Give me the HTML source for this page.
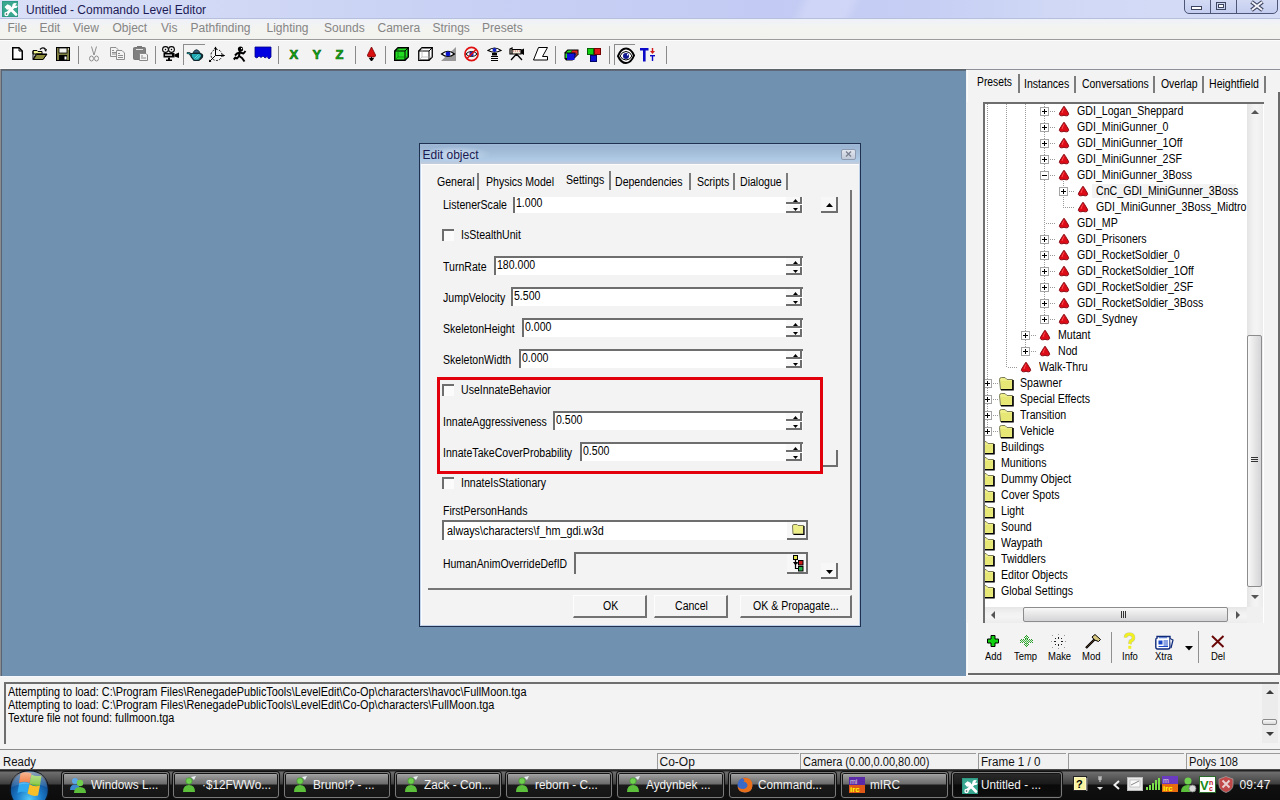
<!DOCTYPE html><html><head><meta charset="utf-8"><title>Commando Level Editor</title><style>
html,body{margin:0;padding:0;}
body{width:1280px;height:800px;overflow:hidden;position:relative;background:#f3f3f3;font-family:"Liberation Sans",sans-serif;}
.t{position:absolute;white-space:pre;font-family:"Liberation Sans",sans-serif;}
.r{position:absolute;}
svg.r{overflow:visible;}
</style></head><body>
<div class="r" style="left:0px;top:0px;width:1280px;height:18px;background:linear-gradient(115deg,transparent 0 62%,rgba(255,255,255,0.18) 63% 66%,transparent 67%),linear-gradient(90deg,#dae0f7 0%,#d0d8f5 18%,#c8d0f4 38%,#c3cbf4 60%,#c6cef4 72%,#d0d8f6 82%,#d4dcf6 100%);"></div>
<div class="r" style="left:0px;top:18px;width:1280px;height:1px;background:#b6c0dc;"></div>
<svg class="r" style="left:2px;top:1px;" width="16" height="16" viewBox="0 0 16 16"><rect width="16" height="16" fill="#2e9a84"/><rect x="1" y="1" width="14" height="14" fill="#3aa890"/><path d="M7.5 7 L14 13.5" stroke="#fff" stroke-width="2.8" stroke-linecap="round"/><path d="M2.5 6 L5.5 3.2 L9 5 L8.5 8.5 L5 8.8 Z" fill="#fff"/><path d="M5 12.5 L12 5.5" stroke="#fff" stroke-width="2.8"/><circle cx="13" cy="4.5" r="2.6" fill="#fff"/><path d="M13 4.5 L15.5 2 L16 5 Z" fill="#3aa890"/><circle cx="4.5" cy="13" r="2.2" fill="#fff"/><circle cx="4.5" cy="13" r="0.8" fill="#1a4a40"/></svg>
<div class="t" style="left:26px;top:4.00px;font-size:12px;line-height:12px;color:#1d1b55;">Untitled - Commando Level Editor</div>
<div class="r" style="left:1184px;top:-2px;width:94px;height:16px;border:1px solid #4d5676;border-radius:0 0 5px 5px;background:linear-gradient(#d3dbf4,#c4cdef);box-sizing:border-box;"></div>
<div class="r" style="left:1210px;top:0px;width:1px;height:14px;background:#4d5676;"></div>
<div class="r" style="left:1236px;top:0px;width:1px;height:14px;background:#4d5676;"></div>
<div class="r" style="left:1191px;top:6px;width:11px;height:4px;border:1px solid #3c4460;background:#fff;box-sizing:border-box;"></div>
<div class="r" style="left:1216px;top:2px;width:10px;height:8px;border:1px solid #3c4460;box-sizing:border-box;"></div>
<div class="r" style="left:1218px;top:4px;width:6px;height:4px;border:1px solid #3c4460;box-sizing:border-box;background:#fff;"></div>
<svg class="r" style="left:1250px;top:1px;" width="14" height="10" viewBox="0 0 14 10"><path d="M1.5 0.8 L12.5 9.2 M12.5 0.8 L1.5 9.2" stroke="#3c4460" stroke-width="4"/><path d="M1.8 1 L12.2 9 M12.2 1 L1.8 9" stroke="#f4f4fa" stroke-width="1.8"/></svg>
<div class="r" style="left:0px;top:19px;width:1280px;height:20px;background:linear-gradient(#eef1f9,#f3f3f1 40%,#f2f2ee);"></div>
<div class="r" style="left:0px;top:39px;width:1280px;height:1px;background:#9c9c9c;"></div>
<div class="t" style="left:7.5px;top:22.00px;font-size:12px;line-height:12px;color:#858585;">File</div>
<div class="t" style="left:39.5px;top:22.00px;font-size:12px;line-height:12px;color:#858585;">Edit</div>
<div class="t" style="left:73px;top:22.00px;font-size:12px;line-height:12px;color:#858585;">View</div>
<div class="t" style="left:112.5px;top:22.00px;font-size:12px;line-height:12px;color:#858585;">Object</div>
<div class="t" style="left:161px;top:22.00px;font-size:12px;line-height:12px;color:#858585;">Vis</div>
<div class="t" style="left:190.5px;top:22.00px;font-size:12px;line-height:12px;color:#858585;">Pathfinding</div>
<div class="t" style="left:266.5px;top:22.00px;font-size:12px;line-height:12px;color:#858585;">Lighting</div>
<div class="t" style="left:324px;top:22.00px;font-size:12px;line-height:12px;color:#858585;">Sounds</div>
<div class="t" style="left:377.5px;top:22.00px;font-size:12px;line-height:12px;color:#858585;">Camera</div>
<div class="t" style="left:432.5px;top:22.00px;font-size:12px;line-height:12px;color:#858585;">Strings</div>
<div class="t" style="left:482px;top:22.00px;font-size:12px;line-height:12px;color:#858585;">Presets</div>
<div class="r" style="left:0px;top:40px;width:1280px;height:29px;background:#f3f3f3;"></div>
<div class="r" style="left:0px;top:40px;width:1280px;height:1px;background:#fcfcfc;"></div>
<div class="r" style="left:0px;top:68px;width:966px;height:1px;background:#f8f8f8;"></div>
<div class="r" style="left:78px;top:46px;width:1px;height:18px;background:#8a8a8a;"></div>
<div class="r" style="left:155px;top:46px;width:1px;height:18px;background:#8a8a8a;"></div>
<div class="r" style="left:278px;top:46px;width:1px;height:18px;background:#8a8a8a;"></div>
<div class="r" style="left:355px;top:46px;width:1px;height:18px;background:#8a8a8a;"></div>
<div class="r" style="left:385px;top:46px;width:1px;height:18px;background:#8a8a8a;"></div>
<div class="r" style="left:555px;top:46px;width:1px;height:18px;background:#8a8a8a;"></div>
<div class="r" style="left:609px;top:46px;width:1px;height:18px;background:#8a8a8a;"></div>
<div class="r" style="left:666px;top:46px;width:1px;height:18px;background:#8a8a8a;"></div>
<svg class="r" style="left:12px;top:47px;" width="11" height="13" viewBox="0 0 11 13"><path d="M0.75 0.75 H7 L10.25 4 V12.25 H0.75 Z" fill="#fff" stroke="#000" stroke-width="1.5"/><path d="M7 1 V4 H10" fill="none" stroke="#000" stroke-width="1"/></svg>
<svg class="r" style="left:32px;top:47px;" width="16" height="14" viewBox="0 0 16 14"><path d="M1 3.5 H5 L6 4.5 H10 V7 H1 Z" fill="#f2f28a" stroke="#000" stroke-width="1"/><path d="M1 4 V12.5 L4 7 H15 L11 12.5 H1" fill="#f2f28a" stroke="#000" stroke-width="1"/><path d="M1.5 12.5 L4.5 7.5 H14.5 L11 12.5 Z" fill="#8c8c3c" stroke="#000" stroke-width="1"/><path d="M8 2.5 Q10.5 -0.5 13.5 2" fill="none" stroke="#000" stroke-width="1.2"/><path d="M12 2.5 L15 2 L14 5 Z" fill="#000"/></svg>
<svg class="r" style="left:56px;top:47px;" width="14" height="14" viewBox="0 0 14 14"><rect x="0.5" y="0.5" width="13" height="13" fill="#7f7f44" stroke="#000" stroke-width="1"/><rect x="3" y="1" width="8" height="5" fill="#f4f4f0" stroke="#000" stroke-width="0.8"/><rect x="3" y="8" width="8" height="5.5" fill="#000"/><rect x="8.5" y="9.5" width="2" height="3" fill="#fff"/><rect x="12" y="1.5" width="1" height="1" fill="#fff"/></svg>
<svg class="r" style="left:89px;top:46px;" width="10" height="16" viewBox="0 0 10 16"><path d="M2.5 0.5 L5 9 M7.5 0.5 L5 9" stroke="#8f8f8f" stroke-width="1"/><ellipse cx="2.5" cy="12.5" rx="2" ry="2.5" fill="none" stroke="#8f8f8f" stroke-width="1"/><ellipse cx="7.5" cy="12.5" rx="2" ry="2.5" fill="none" stroke="#8f8f8f" stroke-width="1"/></svg>
<svg class="r" style="left:110px;top:47px;" width="16" height="13" viewBox="0 0 16 13"><path d="M0.5 0.5 H6 L8 2.5 V9.5 H0.5 Z" fill="#f4f4f4" stroke="#8f8f8f"/><path d="M2 3.5 H4 M2 5.5 H6 M2 7 H6" stroke="#8f8f8f"/><path d="M6.5 3.5 H12 L14.5 6 V12.5 H6.5 Z" fill="#f4f4f4" stroke="#8f8f8f"/><path d="M8 6.5 H10 M8 8.5 H13 M8 10.5 H13" stroke="#8f8f8f"/></svg>
<svg class="r" style="left:133px;top:46px;" width="16" height="15" viewBox="0 0 16 15"><rect x="0.5" y="1.5" width="12" height="12" rx="1" fill="#808080" stroke="#777"/><rect x="4" y="0" width="5" height="2" fill="#777"/><rect x="3" y="3" width="7" height="1" fill="#e0e0e0"/><path d="M6.5 7.5 H13 L14.5 9 V14.5 H6.5 Z" fill="#f4f4f4" stroke="#888"/><path d="M8 10 H10 M8 12 H13" stroke="#888"/></svg>
<svg class="r" style="left:162px;top:46px;" width="18" height="15" viewBox="0 0 18 15"><circle cx="3.5" cy="3.5" r="2.9" fill="#fff" stroke="#000" stroke-width="1.1"/><circle cx="9.5" cy="3.5" r="2.9" fill="#fff" stroke="#000" stroke-width="1.1"/><rect x="2.8" y="2.8" width="1.4" height="1.4" fill="#000"/><rect x="8.8" y="2.8" width="1.4" height="1.4" fill="#000"/><rect x="1.5" y="7" width="11" height="4.5" fill="#000"/><rect x="3" y="8.5" width="7" height="1.2" fill="#fff"/><path d="M12.5 8.5 L17 6.5 V12 L12.5 10.5 Z" fill="#000"/><rect x="6" y="11.5" width="2" height="2.5" fill="#000"/><rect x="4" y="13.5" width="6" height="1.5" fill="#000"/></svg>
<div class="r" style="left:183px;top:44px;width:22px;height:1px;background:#8c8c8c;"></div>
<div class="r" style="left:183px;top:44px;width:1px;height:21px;background:#8c8c8c;"></div>
<svg class="r" style="left:186px;top:49px;" width="18" height="13" viewBox="0 0 18 13"><path d="M0.8 4 L3.5 4.2 L6.5 8" stroke="#102a30" stroke-width="2.2" fill="none"/><path d="M1.2 4.1 L3.4 4.4 L6.3 7.8" stroke="#20a8b0" stroke-width="0.8" fill="none"/><path d="M14 4.8 Q17.2 5.2 16.2 8 L14 10.5" stroke="#102a30" stroke-width="1.6" fill="none"/><path d="M5 4.5 H14.5 L15.8 7 L13 11.3 H8 L5.3 8 Z" fill="#20a8b0" stroke="#102a30" stroke-width="1.2"/><path d="M7 3.8 Q8.5 0.8 10.5 0.8 Q12.5 0.8 14 3.8 Z" fill="#3a5a80" stroke="#102a30" stroke-width="1"/><path d="M8.5 9.5 L12.5 5.5 M10 10.5 L14 6.5" stroke="#70e0e8" stroke-width="0.9"/></svg>
<svg class="r" style="left:208px;top:46px;" width="18" height="17" viewBox="0 0 18 17"><path d="M7.5 1 V9.5 L16.5 9.5 M7.5 9.5 L1.5 15.5" stroke="#000" stroke-width="1" fill="none"/><path d="M6 3 L7.5 0.5 L9 3 Z M14.5 8 L17 9.5 L14.5 11 Z M1 13.5 L1 16 L3.5 16 Z" fill="#000"/><circle cx="8.5" cy="9" r="5.5" fill="none" stroke="#000" stroke-width="1" stroke-dasharray="2 1.5"/></svg>
<svg class="r" style="left:233px;top:46px;" width="14" height="16" viewBox="0 0 14 16"><circle cx="7.5" cy="3" r="2.6" fill="#000"/><rect x="8" y="2" width="1.2" height="1.2" fill="#fff"/><path d="M7 5 L6 10 L9 12 L11.5 15.5 M6 10 L4 12.5 L2.5 11.5 L0.8 13.5 M6.8 6.5 L4 7.5 L2 9.5 M7 6.5 L10.5 7.5 L12.5 5" stroke="#000" stroke-width="2" fill="none" stroke-linejoin="round"/></svg>
<svg class="r" style="left:255px;top:47px;" width="16" height="13" viewBox="0 0 16 13"><path d="M0 0 H16 V10 L14 12 L12 9.5 L10 11 L8 9 L6 10.5 L4 9 L2 11 L0 10 Z" fill="#0000e0" stroke="#00008a" stroke-width="0.8"/></svg>
<div class="t" style="left:289.5px;top:48px;font-size:13px;line-height:13px;font-weight:bold;color:#12b812;-webkit-text-stroke:0.6px #0a5a0a;">X</div>
<div class="t" style="left:312.5px;top:48px;font-size:13px;line-height:13px;font-weight:bold;color:#12b812;-webkit-text-stroke:0.6px #0a5a0a;">Y</div>
<div class="t" style="left:335.5px;top:48px;font-size:13px;line-height:13px;font-weight:bold;color:#12b812;-webkit-text-stroke:0.6px #0a5a0a;">Z</div>
<svg class="r" style="left:366px;top:46px;" width="11" height="16" viewBox="0 0 11 16"><path d="M5.5 1 L9.5 9 Q10 10.5 8 11 H3 Q1 10.5 1.5 9 Z" fill="#d81010" stroke="#700" stroke-width="0.8"/><path d="M5.5 11 V14 M3.5 12.5 L5.5 15 L7.5 12.5 Z" stroke="#000" fill="#000"/></svg>
<svg class="r" style="left:394px;top:47px;" width="15" height="14" viewBox="0 0 15 14"><path d="M0.75 4 L4 0.75 H14.25 V10 L11 13.25 H0.75 Z" fill="#22dd22" stroke="#000" stroke-width="1.5"/><path d="M0.75 4 H11 V13.25 M11 4 L14.25 0.75" stroke="#000" stroke-width="1" fill="none"/><path d="M4 1 V10 H14 M4 10 L1 13" stroke="#087008" stroke-width="0.7" fill="none"/></svg>
<svg class="r" style="left:418px;top:47px;" width="15" height="14" viewBox="0 0 15 14"><path d="M0.75 4 L4 0.75 H14.25 V10 L11 13.25 H0.75 Z" fill="#fff" stroke="#000" stroke-width="1.3"/><path d="M0.75 4 H11 V13.25 M11 4 L14.25 0.75" stroke="#000" stroke-width="1" fill="none"/><path d="M4 1 V10 H14 M4 10 L1 13" stroke="#aaa" stroke-width="0.7" fill="none"/></svg>
<svg class="r" style="left:440px;top:46px;" width="17" height="16" viewBox="0 0 17 16"><path d="M16 1 V15 H1 Z" fill="#999"/><path d="M1.5 8 Q8 2.5 14.5 8 Q8 13 1.5 8 Z" fill="#fff" stroke="#000" stroke-width="1.2"/><circle cx="8" cy="8" r="2.4" fill="#0a14c8"/></svg>
<svg class="r" style="left:463px;top:46px;" width="17" height="16" viewBox="0 0 17 16"><path d="M2.5 8 Q8.5 3 14.5 8 Q8.5 13 2.5 8 Z" fill="#fff" stroke="#000" stroke-width="1"/><circle cx="8.5" cy="8" r="2.2" fill="#2020c0"/><circle cx="8.5" cy="8" r="6.6" fill="none" stroke="#e01010" stroke-width="1.6"/><path d="M4 12.5 L13 3.5" stroke="#e01010" stroke-width="1.6"/></svg>
<svg class="r" style="left:487px;top:46px;" width="15" height="17" viewBox="0 0 15 17"><path d="M1 4.5 Q7.5 -0.5 14 4.5 Q7.5 8 1 4.5 Z" fill="#fff" stroke="#000" stroke-width="1.2"/><circle cx="7.5" cy="4" r="2" fill="#1020c0"/><path d="M5 7 H10 V9.5 H5 Z" fill="#000"/><path d="M4 10.5 H11 M4 12.5 H11 M4 14.5 H11" stroke="#000" stroke-width="1.2"/></svg>
<svg class="r" style="left:509px;top:46px;" width="16" height="16" viewBox="0 0 16 16"><path d="M1 3 L3 2 V8 H1 Z M3 3.5 H12 V8 H3 Z" fill="#f4e8d8" stroke="#000" stroke-width="1.2"/><path d="M12 4 L15 2.5 V9 L12 7.5 Z" fill="#000"/><path d="M4 5 H11" stroke="#b04040" stroke-width="0.8" stroke-dasharray="1 1"/><path d="M7.5 8 L2 14 M7.5 8 L13 14 M7.5 8 V10" stroke="#000" stroke-width="1.3"/></svg>
<svg class="r" style="left:533px;top:47px;" width="15" height="14" viewBox="0 0 15 14"><path d="M5.5 0.5 H14.5 L9.5 9.5 H14.5 V13 H0.5 Z" fill="#fff" stroke="#000" stroke-width="1"/></svg>
<svg class="r" style="left:564px;top:49px;" width="15" height="12" viewBox="0 0 15 12"><path d="M0.5 3.5 L3.5 0.5 H14.5 V5.5 L8.5 11.5 H2 L0.5 9.5 Z" fill="#000"/><path d="M2 3.5 L4 1.5 H8.5 L6.5 3.5 Z M1.5 4.5 H3 V9 H1.5 Z" fill="#22e022"/><path d="M8.5 1.5 H13.5 V5 L11.5 7 V3.5 H7 Z" fill="#e02020"/><path d="M11 5 L13.5 3 V5.5 L11 8 Z" fill="#a04020"/><rect x="3" y="4.5" width="7.5" height="6.5" fill="#1010d8"/><path d="M10.5 4.5 L12.5 4.5 L10.5 9 Z" fill="#0808a0"/></svg>
<svg class="r" style="left:587px;top:48px;" width="14" height="14" viewBox="0 0 14 14"><rect x="0.5" y="0.5" width="6" height="6" fill="#10d010" stroke="#086008" stroke-width="1"/><rect x="7.5" y="0.5" width="6" height="6" fill="#e01818" stroke="#700" stroke-width="1"/><rect x="3.5" y="7.5" width="6" height="6" fill="#1010d0" stroke="#00086a" stroke-width="1"/></svg>
<div class="r" style="left:614px;top:44px;width:21px;height:1px;background:#8c8c8c;"></div>
<div class="r" style="left:614px;top:44px;width:1px;height:21px;background:#8c8c8c;"></div>
<svg class="r" style="left:617px;top:47px;" width="18" height="17" viewBox="0 0 18 17"><path d="M1 9 Q4 1.5 9 1.5 Q14 1.5 17 8.5 Q14 16 9 16 Q4 16 1 9 Z" fill="#fff" stroke="#000" stroke-width="2"/><path d="M3 9 Q5 4.5 9 4.5 Q13 4.5 15 9 Q13 13 9 13 Q5 13 3 9 Z" fill="none" stroke="#000" stroke-width="1"/><circle cx="9" cy="9" r="3" fill="#101890"/><rect x="10" y="7" width="1.2" height="1.5" fill="#fff"/></svg>
<svg class="r" style="left:640px;top:48px;" width="16" height="14" viewBox="0 0 16 14"><rect x="0" y="0" width="8.5" height="2.5" fill="#0a0ac8"/><rect x="3" y="0" width="2.6" height="13.5" fill="#0a0ac8"/><path d="M12.5 0 V3.5" stroke="#d01818" stroke-width="1.4"/><path d="M10 3 H15 L12.5 6 Z" fill="#d01818"/><rect x="10" y="7" width="5" height="1.4" fill="#0a0ac8"/><rect x="11.8" y="7" width="1.4" height="6" fill="#0a0ac8"/></svg>
<div class="r" style="left:0px;top:70px;width:966px;height:606px;background:#7091b0;"></div>
<div class="r" style="left:0px;top:69px;width:966px;height:1px;background:#5c636b;"></div>
<div class="r" style="left:0px;top:70px;width:966px;height:1px;background:#5c6a7a;"></div>
<div class="r" style="left:0px;top:69px;width:1px;height:607px;background:#8a8c90;"></div>
<div class="r" style="left:1px;top:70px;width:1px;height:606px;background:#5a6474;"></div>
<div class="r" style="left:966px;top:69px;width:314px;height:607px;background:#f3f3f3;"></div>
<div class="r" style="left:966px;top:69px;width:314px;height:1px;background:#8d9197;"></div>
<div class="r" style="left:967px;top:70px;width:1px;height:605px;background:#fbfbfb;"></div>
<div class="r" style="left:968px;top:673px;width:312px;height:2px;background:#6a6a6a;"></div>
<div class="r" style="left:966px;top:676px;width:314px;height:1px;background:#8a8a8a;"></div>
<div class="r" style="left:1278px;top:92px;width:2px;height:583px;background:#6a6a6a;"></div>
<div class="r" style="left:0px;top:676px;width:1280px;height:74px;background:#f3f3f3;"></div>
<div class="r" style="left:0px;top:676px;width:966px;height:1px;background:#f4f7fb;"></div>
<div class="r" style="left:966px;top:675px;width:314px;height:1px;background:#f8f8f8;"></div>
<div class="r" style="left:4px;top:682px;width:1275px;height:62px;background:#f3f3f3;border-top:2px solid #6e6e6e;border-left:2px solid #6e6e6e;box-sizing:border-box;"></div>
<div class="t" style="left:7.5px;top:686.00px;font-size:12px;line-height:12px;color:#000;transform:scaleX(0.907);transform-origin:0 0;">Attempting to load: C:\Program Files\RenegadePublicTools\LevelEdit\Co-Op\characters\havoc\FullMoon.tga</div>
<div class="t" style="left:7.5px;top:699.00px;font-size:12px;line-height:12px;color:#000;transform:scaleX(0.907);transform-origin:0 0;">Attempting to load: C:\Program Files\RenegadePublicTools\LevelEdit\Co-Op\characters\FullMoon.tga</div>
<div class="t" style="left:7.5px;top:712.00px;font-size:12px;line-height:12px;color:#000;transform:scaleX(0.907);transform-origin:0 0;">Texture file not found: fullmoon.tga</div>
<div class="r" style="left:1262px;top:684px;width:16px;height:59px;background:#ececec;"></div>
<svg class="r" style="left:1265px;top:689px;" width="10" height="6" viewBox="0 0 10 6"><path d="M1 5 L5 1 L9 5 Z" fill="#3a3a3a"/></svg>
<svg class="r" style="left:1265px;top:731px;" width="10" height="6" viewBox="0 0 10 6"><path d="M1 1 L5 5 L9 1 Z" fill="#3a3a3a"/></svg>
<div class="r" style="left:1262px;top:719px;width:15px;height:6px;background:linear-gradient(#fafafa,#d8d8d8);border:1px solid #8a8a8a;border-radius:2px;box-sizing:border-box;"></div>
<div class="r" style="left:0px;top:749px;width:1280px;height:1px;background:#8a8a8a;"></div>
<div class="r" style="left:0px;top:750px;width:1280px;height:20px;background:#f1f1f1;"></div>
<div class="t" style="left:3px;top:756.00px;font-size:12px;line-height:12px;color:#111;transform:scaleX(0.95);transform-origin:0 0;">Ready</div>
<div class="r" style="left:657px;top:753px;width:142px;height:17px;border-top:1px solid #9a9a9a;border-left:1px solid #9a9a9a;box-sizing:border-box;"></div>
<div class="t" style="left:659.5px;top:756.00px;font-size:12px;line-height:12px;color:#111;">Co-Op</div>
<div class="r" style="left:800px;top:753px;width:176px;height:17px;border-top:1px solid #9a9a9a;border-left:1px solid #9a9a9a;box-sizing:border-box;"></div>
<div class="t" style="left:802.5px;top:756.00px;font-size:12px;line-height:12px;color:#111;transform:scaleX(0.92);transform-origin:0 0;">Camera (0.00,0.00,80.00)</div>
<div class="r" style="left:978px;top:753px;width:88px;height:17px;border-top:1px solid #9a9a9a;border-left:1px solid #9a9a9a;box-sizing:border-box;"></div>
<div class="t" style="left:980.5px;top:756.00px;font-size:12px;line-height:12px;color:#111;transform:scaleX(0.97);transform-origin:0 0;">Frame 1 / 0</div>
<div class="r" style="left:1068px;top:753px;width:116px;height:17px;border-top:1px solid #9a9a9a;border-left:1px solid #9a9a9a;box-sizing:border-box;"></div>
<div class="r" style="left:1186px;top:753px;width:94px;height:17px;border-top:1px solid #9a9a9a;border-left:1px solid #9a9a9a;box-sizing:border-box;"></div>
<div class="t" style="left:1188.5px;top:756.00px;font-size:12px;line-height:12px;color:#111;transform:scaleX(0.93);transform-origin:0 0;">Polys 108</div>
<div class="t" style="left:976.6px;top:76.00px;font-size:12px;line-height:12px;color:#000;transform:scaleX(0.86);transform-origin:0 0;">Presets</div>
<div class="t" style="left:1023.5px;top:78.00px;font-size:12px;line-height:12px;color:#000;transform:scaleX(0.88);transform-origin:0 0;">Instances</div>
<div class="t" style="left:1081.75px;top:78.00px;font-size:12px;line-height:12px;color:#000;transform:scaleX(0.87);transform-origin:0 0;">Conversations</div>
<div class="t" style="left:1160.6px;top:78.00px;font-size:12px;line-height:12px;color:#000;transform:scaleX(0.87);transform-origin:0 0;">Overlap</div>
<div class="t" style="left:1209.4px;top:78.00px;font-size:12px;line-height:12px;color:#000;transform:scaleX(0.88);transform-origin:0 0;">Heightfield</div>
<div class="r" style="left:1017.5px;top:73.5px;width:2px;height:19.0px;background:#7c7c7c;"></div>
<div class="r" style="left:1073.5px;top:75.5px;width:2px;height:17.0px;background:#7c7c7c;"></div>
<div class="r" style="left:1152.5px;top:75.5px;width:2px;height:17.0px;background:#7c7c7c;"></div>
<div class="r" style="left:1201.5px;top:75.5px;width:2px;height:17.0px;background:#7c7c7c;"></div>
<div class="r" style="left:1263.5px;top:75.5px;width:2px;height:17.0px;background:#7c7c7c;"></div>
<div class="r" style="left:983px;top:102px;width:281px;height:521px;background:#fff;"></div>
<div class="r" style="left:983px;top:102px;width:281px;height:2px;background:#6e6e6e;"></div>
<div class="r" style="left:983px;top:102px;width:2px;height:521px;background:#6e6e6e;"></div>
<div class="r" style="left:1092px;top:184px;width:144px;height:14px;background:#f3f3f3;"></div>
<div class="r" style="left:987px;top:104px;width:1px;height:328px;background:repeating-linear-gradient(#9a9a9a 0 1px,transparent 1px 2px);"></div>
<div class="r" style="left:1006px;top:104px;width:1px;height:264px;background:repeating-linear-gradient(#9a9a9a 0 1px,transparent 1px 2px);"></div>
<div class="r" style="left:1025px;top:104px;width:1px;height:248px;background:repeating-linear-gradient(#9a9a9a 0 1px,transparent 1px 2px);"></div>
<div class="r" style="left:1044px;top:104px;width:1px;height:216px;background:repeating-linear-gradient(#9a9a9a 0 1px,transparent 1px 2px);"></div>
<div class="r" style="left:1063px;top:181px;width:1px;height:27px;background:repeating-linear-gradient(#9a9a9a 0 1px,transparent 1px 2px);"></div>
<div class="r" style="left:1050px;top:111px;width:5px;height:1px;background:repeating-linear-gradient(90deg,#9a9a9a 0 1px,transparent 1px 2px);"></div>
<div class="r" style="left:1040px;top:107px;width:9px;height:9px;border:1px solid #a4a4a4;background:#fff;box-sizing:border-box;"></div>
<div class="r" style="left:1042px;top:111px;width:5px;height:1px;background:#000;"></div>
<div class="r" style="left:1044px;top:109px;width:1px;height:5px;background:#000;"></div>
<div class="t" style="left:1076.5px;top:105.00px;font-size:12px;line-height:12px;color:#000;transform:scaleX(0.885);transform-origin:0 0;">GDI_Logan_Sheppard</div>
<div class="r" style="left:1050px;top:127px;width:5px;height:1px;background:repeating-linear-gradient(90deg,#9a9a9a 0 1px,transparent 1px 2px);"></div>
<div class="r" style="left:1040px;top:123px;width:9px;height:9px;border:1px solid #a4a4a4;background:#fff;box-sizing:border-box;"></div>
<div class="r" style="left:1042px;top:127px;width:5px;height:1px;background:#000;"></div>
<div class="r" style="left:1044px;top:125px;width:1px;height:5px;background:#000;"></div>
<div class="t" style="left:1076.5px;top:121.00px;font-size:12px;line-height:12px;color:#000;transform:scaleX(0.885);transform-origin:0 0;">GDI_MiniGunner_0</div>
<div class="r" style="left:1050px;top:143px;width:5px;height:1px;background:repeating-linear-gradient(90deg,#9a9a9a 0 1px,transparent 1px 2px);"></div>
<div class="r" style="left:1040px;top:139px;width:9px;height:9px;border:1px solid #a4a4a4;background:#fff;box-sizing:border-box;"></div>
<div class="r" style="left:1042px;top:143px;width:5px;height:1px;background:#000;"></div>
<div class="r" style="left:1044px;top:141px;width:1px;height:5px;background:#000;"></div>
<div class="t" style="left:1076.5px;top:137.00px;font-size:12px;line-height:12px;color:#000;transform:scaleX(0.885);transform-origin:0 0;">GDI_MiniGunner_1Off</div>
<div class="r" style="left:1050px;top:159px;width:5px;height:1px;background:repeating-linear-gradient(90deg,#9a9a9a 0 1px,transparent 1px 2px);"></div>
<div class="r" style="left:1040px;top:155px;width:9px;height:9px;border:1px solid #a4a4a4;background:#fff;box-sizing:border-box;"></div>
<div class="r" style="left:1042px;top:159px;width:5px;height:1px;background:#000;"></div>
<div class="r" style="left:1044px;top:157px;width:1px;height:5px;background:#000;"></div>
<div class="t" style="left:1076.5px;top:153.00px;font-size:12px;line-height:12px;color:#000;transform:scaleX(0.885);transform-origin:0 0;">GDI_MiniGunner_2SF</div>
<div class="r" style="left:1050px;top:175px;width:5px;height:1px;background:repeating-linear-gradient(90deg,#9a9a9a 0 1px,transparent 1px 2px);"></div>
<div class="r" style="left:1040px;top:171px;width:9px;height:9px;border:1px solid #a4a4a4;background:#fff;box-sizing:border-box;"></div>
<div class="r" style="left:1042px;top:175px;width:5px;height:1px;background:#000;"></div>
<div class="t" style="left:1076.5px;top:169.00px;font-size:12px;line-height:12px;color:#000;transform:scaleX(0.885);transform-origin:0 0;">GDI_MiniGunner_3Boss</div>
<div class="r" style="left:1069px;top:191px;width:5px;height:1px;background:repeating-linear-gradient(90deg,#9a9a9a 0 1px,transparent 1px 2px);"></div>
<div class="r" style="left:1059px;top:187px;width:9px;height:9px;border:1px solid #a4a4a4;background:#fff;box-sizing:border-box;"></div>
<div class="r" style="left:1061px;top:191px;width:5px;height:1px;background:#000;"></div>
<div class="r" style="left:1063px;top:189px;width:1px;height:5px;background:#000;"></div>
<div class="t" style="left:1095.5px;top:185.00px;font-size:12px;line-height:12px;color:#000;transform:scaleX(0.885);transform-origin:0 0;">CnC_GDI_MiniGunner_3Boss</div>
<div class="r" style="left:1065px;top:207px;width:9px;height:1px;background:repeating-linear-gradient(90deg,#9a9a9a 0 1px,transparent 1px 2px);"></div>
<div class="t" style="left:1095.5px;top:201.00px;font-size:12px;line-height:12px;color:#000;transform:scaleX(0.885);transform-origin:0 0;">GDI_MiniGunner_3Boss_Midtro</div>
<div class="r" style="left:1046px;top:223px;width:9px;height:1px;background:repeating-linear-gradient(90deg,#9a9a9a 0 1px,transparent 1px 2px);"></div>
<div class="t" style="left:1076.5px;top:217.00px;font-size:12px;line-height:12px;color:#000;transform:scaleX(0.885);transform-origin:0 0;">GDI_MP</div>
<div class="r" style="left:1050px;top:239px;width:5px;height:1px;background:repeating-linear-gradient(90deg,#9a9a9a 0 1px,transparent 1px 2px);"></div>
<div class="r" style="left:1040px;top:235px;width:9px;height:9px;border:1px solid #a4a4a4;background:#fff;box-sizing:border-box;"></div>
<div class="r" style="left:1042px;top:239px;width:5px;height:1px;background:#000;"></div>
<div class="r" style="left:1044px;top:237px;width:1px;height:5px;background:#000;"></div>
<div class="t" style="left:1076.5px;top:233.00px;font-size:12px;line-height:12px;color:#000;transform:scaleX(0.885);transform-origin:0 0;">GDI_Prisoners</div>
<div class="r" style="left:1050px;top:255px;width:5px;height:1px;background:repeating-linear-gradient(90deg,#9a9a9a 0 1px,transparent 1px 2px);"></div>
<div class="r" style="left:1040px;top:251px;width:9px;height:9px;border:1px solid #a4a4a4;background:#fff;box-sizing:border-box;"></div>
<div class="r" style="left:1042px;top:255px;width:5px;height:1px;background:#000;"></div>
<div class="r" style="left:1044px;top:253px;width:1px;height:5px;background:#000;"></div>
<div class="t" style="left:1076.5px;top:249.00px;font-size:12px;line-height:12px;color:#000;transform:scaleX(0.885);transform-origin:0 0;">GDI_RocketSoldier_0</div>
<div class="r" style="left:1050px;top:271px;width:5px;height:1px;background:repeating-linear-gradient(90deg,#9a9a9a 0 1px,transparent 1px 2px);"></div>
<div class="r" style="left:1040px;top:267px;width:9px;height:9px;border:1px solid #a4a4a4;background:#fff;box-sizing:border-box;"></div>
<div class="r" style="left:1042px;top:271px;width:5px;height:1px;background:#000;"></div>
<div class="r" style="left:1044px;top:269px;width:1px;height:5px;background:#000;"></div>
<div class="t" style="left:1076.5px;top:265.00px;font-size:12px;line-height:12px;color:#000;transform:scaleX(0.885);transform-origin:0 0;">GDI_RocketSoldier_1Off</div>
<div class="r" style="left:1050px;top:287px;width:5px;height:1px;background:repeating-linear-gradient(90deg,#9a9a9a 0 1px,transparent 1px 2px);"></div>
<div class="r" style="left:1040px;top:283px;width:9px;height:9px;border:1px solid #a4a4a4;background:#fff;box-sizing:border-box;"></div>
<div class="r" style="left:1042px;top:287px;width:5px;height:1px;background:#000;"></div>
<div class="r" style="left:1044px;top:285px;width:1px;height:5px;background:#000;"></div>
<div class="t" style="left:1076.5px;top:281.00px;font-size:12px;line-height:12px;color:#000;transform:scaleX(0.885);transform-origin:0 0;">GDI_RocketSoldier_2SF</div>
<div class="r" style="left:1050px;top:303px;width:5px;height:1px;background:repeating-linear-gradient(90deg,#9a9a9a 0 1px,transparent 1px 2px);"></div>
<div class="r" style="left:1040px;top:299px;width:9px;height:9px;border:1px solid #a4a4a4;background:#fff;box-sizing:border-box;"></div>
<div class="r" style="left:1042px;top:303px;width:5px;height:1px;background:#000;"></div>
<div class="r" style="left:1044px;top:301px;width:1px;height:5px;background:#000;"></div>
<div class="t" style="left:1076.5px;top:297.00px;font-size:12px;line-height:12px;color:#000;transform:scaleX(0.885);transform-origin:0 0;">GDI_RocketSoldier_3Boss</div>
<div class="r" style="left:1050px;top:319px;width:5px;height:1px;background:repeating-linear-gradient(90deg,#9a9a9a 0 1px,transparent 1px 2px);"></div>
<div class="r" style="left:1040px;top:315px;width:9px;height:9px;border:1px solid #a4a4a4;background:#fff;box-sizing:border-box;"></div>
<div class="r" style="left:1042px;top:319px;width:5px;height:1px;background:#000;"></div>
<div class="r" style="left:1044px;top:317px;width:1px;height:5px;background:#000;"></div>
<div class="t" style="left:1076.5px;top:313.00px;font-size:12px;line-height:12px;color:#000;transform:scaleX(0.885);transform-origin:0 0;">GDI_Sydney</div>
<div class="r" style="left:1031px;top:335px;width:5px;height:1px;background:repeating-linear-gradient(90deg,#9a9a9a 0 1px,transparent 1px 2px);"></div>
<div class="r" style="left:1021px;top:331px;width:9px;height:9px;border:1px solid #a4a4a4;background:#fff;box-sizing:border-box;"></div>
<div class="r" style="left:1023px;top:335px;width:5px;height:1px;background:#000;"></div>
<div class="r" style="left:1025px;top:333px;width:1px;height:5px;background:#000;"></div>
<div class="t" style="left:1057.5px;top:329.00px;font-size:12px;line-height:12px;color:#000;transform:scaleX(0.885);transform-origin:0 0;">Mutant</div>
<div class="r" style="left:1031px;top:351px;width:5px;height:1px;background:repeating-linear-gradient(90deg,#9a9a9a 0 1px,transparent 1px 2px);"></div>
<div class="r" style="left:1021px;top:347px;width:9px;height:9px;border:1px solid #a4a4a4;background:#fff;box-sizing:border-box;"></div>
<div class="r" style="left:1023px;top:351px;width:5px;height:1px;background:#000;"></div>
<div class="r" style="left:1025px;top:349px;width:1px;height:5px;background:#000;"></div>
<div class="t" style="left:1057.5px;top:345.00px;font-size:12px;line-height:12px;color:#000;transform:scaleX(0.885);transform-origin:0 0;">Nod</div>
<div class="r" style="left:1008px;top:367px;width:9px;height:1px;background:repeating-linear-gradient(90deg,#9a9a9a 0 1px,transparent 1px 2px);"></div>
<div class="t" style="left:1038.5px;top:361.00px;font-size:12px;line-height:12px;color:#000;transform:scaleX(0.885);transform-origin:0 0;">Walk-Thru</div>
<div class="r" style="left:993px;top:383px;width:5px;height:1px;background:repeating-linear-gradient(90deg,#9a9a9a 0 1px,transparent 1px 2px);"></div>
<div class="r" style="left:983px;top:379px;width:9px;height:9px;border:1px solid #a4a4a4;background:#fff;box-sizing:border-box;"></div>
<div class="r" style="left:985px;top:383px;width:5px;height:1px;background:#000;"></div>
<div class="r" style="left:987px;top:381px;width:1px;height:5px;background:#000;"></div>
<div class="t" style="left:1019.5px;top:377.00px;font-size:12px;line-height:12px;color:#000;transform:scaleX(0.885);transform-origin:0 0;">Spawner</div>
<div class="r" style="left:993px;top:399px;width:5px;height:1px;background:repeating-linear-gradient(90deg,#9a9a9a 0 1px,transparent 1px 2px);"></div>
<div class="r" style="left:983px;top:395px;width:9px;height:9px;border:1px solid #a4a4a4;background:#fff;box-sizing:border-box;"></div>
<div class="r" style="left:985px;top:399px;width:5px;height:1px;background:#000;"></div>
<div class="r" style="left:987px;top:397px;width:1px;height:5px;background:#000;"></div>
<div class="t" style="left:1019.5px;top:393.00px;font-size:12px;line-height:12px;color:#000;transform:scaleX(0.885);transform-origin:0 0;">Special Effects</div>
<div class="r" style="left:993px;top:415px;width:5px;height:1px;background:repeating-linear-gradient(90deg,#9a9a9a 0 1px,transparent 1px 2px);"></div>
<div class="r" style="left:983px;top:411px;width:9px;height:9px;border:1px solid #a4a4a4;background:#fff;box-sizing:border-box;"></div>
<div class="r" style="left:985px;top:415px;width:5px;height:1px;background:#000;"></div>
<div class="r" style="left:987px;top:413px;width:1px;height:5px;background:#000;"></div>
<div class="t" style="left:1019.5px;top:409.00px;font-size:12px;line-height:12px;color:#000;transform:scaleX(0.885);transform-origin:0 0;">Transition</div>
<div class="r" style="left:993px;top:431px;width:5px;height:1px;background:repeating-linear-gradient(90deg,#9a9a9a 0 1px,transparent 1px 2px);"></div>
<div class="r" style="left:983px;top:427px;width:9px;height:9px;border:1px solid #a4a4a4;background:#fff;box-sizing:border-box;"></div>
<div class="r" style="left:985px;top:431px;width:5px;height:1px;background:#000;"></div>
<div class="r" style="left:987px;top:429px;width:1px;height:5px;background:#000;"></div>
<div class="t" style="left:1019.5px;top:425.00px;font-size:12px;line-height:12px;color:#000;transform:scaleX(0.885);transform-origin:0 0;">Vehicle</div>
<div class="t" style="left:1000.5px;top:441.00px;font-size:12px;line-height:12px;color:#000;transform:scaleX(0.885);transform-origin:0 0;">Buildings</div>
<div class="t" style="left:1000.5px;top:457.00px;font-size:12px;line-height:12px;color:#000;transform:scaleX(0.885);transform-origin:0 0;">Munitions</div>
<div class="t" style="left:1000.5px;top:473.00px;font-size:12px;line-height:12px;color:#000;transform:scaleX(0.885);transform-origin:0 0;">Dummy Object</div>
<div class="t" style="left:1000.5px;top:489.00px;font-size:12px;line-height:12px;color:#000;transform:scaleX(0.885);transform-origin:0 0;">Cover Spots</div>
<div class="t" style="left:1000.5px;top:505.00px;font-size:12px;line-height:12px;color:#000;transform:scaleX(0.885);transform-origin:0 0;">Light</div>
<div class="t" style="left:1000.5px;top:521.00px;font-size:12px;line-height:12px;color:#000;transform:scaleX(0.885);transform-origin:0 0;">Sound</div>
<div class="t" style="left:1000.5px;top:537.00px;font-size:12px;line-height:12px;color:#000;transform:scaleX(0.885);transform-origin:0 0;">Waypath</div>
<div class="t" style="left:1000.5px;top:553.00px;font-size:12px;line-height:12px;color:#000;transform:scaleX(0.885);transform-origin:0 0;">Twiddlers</div>
<div class="t" style="left:1000.5px;top:569.00px;font-size:12px;line-height:12px;color:#000;transform:scaleX(0.885);transform-origin:0 0;">Editor Objects</div>
<div class="t" style="left:1000.5px;top:585.00px;font-size:12px;line-height:12px;color:#000;transform:scaleX(0.885);transform-origin:0 0;">Global Settings</div>
<svg class="r" style="left:0;top:0" width="1280" height="800" viewBox="0 0 1280 800"><g transform="translate(1059,106)"><path d="M5 0.2 Q6.5 2 8 4.8 Q9.8 7.2 9.6 8.6 Q9.2 9.8 7.5 9.8 Q6 9.8 5 9.2 Q4 9.8 2.5 9.8 Q0.8 9.8 0.4 8.6 Q0.2 7.2 2 4.8 Q3.5 2 5 0.2 Z" fill="#dc0c18" stroke="#7a0008" stroke-width="0.9"/><path d="M4.8 2.5 Q3.8 4.5 3 7" stroke="#ff5050" stroke-width="1" fill="none"/></g><g transform="translate(1059,122)"><path d="M5 0.2 Q6.5 2 8 4.8 Q9.8 7.2 9.6 8.6 Q9.2 9.8 7.5 9.8 Q6 9.8 5 9.2 Q4 9.8 2.5 9.8 Q0.8 9.8 0.4 8.6 Q0.2 7.2 2 4.8 Q3.5 2 5 0.2 Z" fill="#dc0c18" stroke="#7a0008" stroke-width="0.9"/><path d="M4.8 2.5 Q3.8 4.5 3 7" stroke="#ff5050" stroke-width="1" fill="none"/></g><g transform="translate(1059,138)"><path d="M5 0.2 Q6.5 2 8 4.8 Q9.8 7.2 9.6 8.6 Q9.2 9.8 7.5 9.8 Q6 9.8 5 9.2 Q4 9.8 2.5 9.8 Q0.8 9.8 0.4 8.6 Q0.2 7.2 2 4.8 Q3.5 2 5 0.2 Z" fill="#dc0c18" stroke="#7a0008" stroke-width="0.9"/><path d="M4.8 2.5 Q3.8 4.5 3 7" stroke="#ff5050" stroke-width="1" fill="none"/></g><g transform="translate(1059,154)"><path d="M5 0.2 Q6.5 2 8 4.8 Q9.8 7.2 9.6 8.6 Q9.2 9.8 7.5 9.8 Q6 9.8 5 9.2 Q4 9.8 2.5 9.8 Q0.8 9.8 0.4 8.6 Q0.2 7.2 2 4.8 Q3.5 2 5 0.2 Z" fill="#dc0c18" stroke="#7a0008" stroke-width="0.9"/><path d="M4.8 2.5 Q3.8 4.5 3 7" stroke="#ff5050" stroke-width="1" fill="none"/></g><g transform="translate(1059,170)"><path d="M5 0.2 Q6.5 2 8 4.8 Q9.8 7.2 9.6 8.6 Q9.2 9.8 7.5 9.8 Q6 9.8 5 9.2 Q4 9.8 2.5 9.8 Q0.8 9.8 0.4 8.6 Q0.2 7.2 2 4.8 Q3.5 2 5 0.2 Z" fill="#dc0c18" stroke="#7a0008" stroke-width="0.9"/><path d="M4.8 2.5 Q3.8 4.5 3 7" stroke="#ff5050" stroke-width="1" fill="none"/></g><g transform="translate(1078,186)"><path d="M5 0.2 Q6.5 2 8 4.8 Q9.8 7.2 9.6 8.6 Q9.2 9.8 7.5 9.8 Q6 9.8 5 9.2 Q4 9.8 2.5 9.8 Q0.8 9.8 0.4 8.6 Q0.2 7.2 2 4.8 Q3.5 2 5 0.2 Z" fill="#dc0c18" stroke="#7a0008" stroke-width="0.9"/><path d="M4.8 2.5 Q3.8 4.5 3 7" stroke="#ff5050" stroke-width="1" fill="none"/></g><g transform="translate(1078,202)"><path d="M5 0.2 Q6.5 2 8 4.8 Q9.8 7.2 9.6 8.6 Q9.2 9.8 7.5 9.8 Q6 9.8 5 9.2 Q4 9.8 2.5 9.8 Q0.8 9.8 0.4 8.6 Q0.2 7.2 2 4.8 Q3.5 2 5 0.2 Z" fill="#dc0c18" stroke="#7a0008" stroke-width="0.9"/><path d="M4.8 2.5 Q3.8 4.5 3 7" stroke="#ff5050" stroke-width="1" fill="none"/></g><g transform="translate(1059,218)"><path d="M5 0.2 Q6.5 2 8 4.8 Q9.8 7.2 9.6 8.6 Q9.2 9.8 7.5 9.8 Q6 9.8 5 9.2 Q4 9.8 2.5 9.8 Q0.8 9.8 0.4 8.6 Q0.2 7.2 2 4.8 Q3.5 2 5 0.2 Z" fill="#dc0c18" stroke="#7a0008" stroke-width="0.9"/><path d="M4.8 2.5 Q3.8 4.5 3 7" stroke="#ff5050" stroke-width="1" fill="none"/></g><g transform="translate(1059,234)"><path d="M5 0.2 Q6.5 2 8 4.8 Q9.8 7.2 9.6 8.6 Q9.2 9.8 7.5 9.8 Q6 9.8 5 9.2 Q4 9.8 2.5 9.8 Q0.8 9.8 0.4 8.6 Q0.2 7.2 2 4.8 Q3.5 2 5 0.2 Z" fill="#dc0c18" stroke="#7a0008" stroke-width="0.9"/><path d="M4.8 2.5 Q3.8 4.5 3 7" stroke="#ff5050" stroke-width="1" fill="none"/></g><g transform="translate(1059,250)"><path d="M5 0.2 Q6.5 2 8 4.8 Q9.8 7.2 9.6 8.6 Q9.2 9.8 7.5 9.8 Q6 9.8 5 9.2 Q4 9.8 2.5 9.8 Q0.8 9.8 0.4 8.6 Q0.2 7.2 2 4.8 Q3.5 2 5 0.2 Z" fill="#dc0c18" stroke="#7a0008" stroke-width="0.9"/><path d="M4.8 2.5 Q3.8 4.5 3 7" stroke="#ff5050" stroke-width="1" fill="none"/></g><g transform="translate(1059,266)"><path d="M5 0.2 Q6.5 2 8 4.8 Q9.8 7.2 9.6 8.6 Q9.2 9.8 7.5 9.8 Q6 9.8 5 9.2 Q4 9.8 2.5 9.8 Q0.8 9.8 0.4 8.6 Q0.2 7.2 2 4.8 Q3.5 2 5 0.2 Z" fill="#dc0c18" stroke="#7a0008" stroke-width="0.9"/><path d="M4.8 2.5 Q3.8 4.5 3 7" stroke="#ff5050" stroke-width="1" fill="none"/></g><g transform="translate(1059,282)"><path d="M5 0.2 Q6.5 2 8 4.8 Q9.8 7.2 9.6 8.6 Q9.2 9.8 7.5 9.8 Q6 9.8 5 9.2 Q4 9.8 2.5 9.8 Q0.8 9.8 0.4 8.6 Q0.2 7.2 2 4.8 Q3.5 2 5 0.2 Z" fill="#dc0c18" stroke="#7a0008" stroke-width="0.9"/><path d="M4.8 2.5 Q3.8 4.5 3 7" stroke="#ff5050" stroke-width="1" fill="none"/></g><g transform="translate(1059,298)"><path d="M5 0.2 Q6.5 2 8 4.8 Q9.8 7.2 9.6 8.6 Q9.2 9.8 7.5 9.8 Q6 9.8 5 9.2 Q4 9.8 2.5 9.8 Q0.8 9.8 0.4 8.6 Q0.2 7.2 2 4.8 Q3.5 2 5 0.2 Z" fill="#dc0c18" stroke="#7a0008" stroke-width="0.9"/><path d="M4.8 2.5 Q3.8 4.5 3 7" stroke="#ff5050" stroke-width="1" fill="none"/></g><g transform="translate(1059,314)"><path d="M5 0.2 Q6.5 2 8 4.8 Q9.8 7.2 9.6 8.6 Q9.2 9.8 7.5 9.8 Q6 9.8 5 9.2 Q4 9.8 2.5 9.8 Q0.8 9.8 0.4 8.6 Q0.2 7.2 2 4.8 Q3.5 2 5 0.2 Z" fill="#dc0c18" stroke="#7a0008" stroke-width="0.9"/><path d="M4.8 2.5 Q3.8 4.5 3 7" stroke="#ff5050" stroke-width="1" fill="none"/></g><g transform="translate(1040,330)"><path d="M5 0.2 Q6.5 2 8 4.8 Q9.8 7.2 9.6 8.6 Q9.2 9.8 7.5 9.8 Q6 9.8 5 9.2 Q4 9.8 2.5 9.8 Q0.8 9.8 0.4 8.6 Q0.2 7.2 2 4.8 Q3.5 2 5 0.2 Z" fill="#dc0c18" stroke="#7a0008" stroke-width="0.9"/><path d="M4.8 2.5 Q3.8 4.5 3 7" stroke="#ff5050" stroke-width="1" fill="none"/></g><g transform="translate(1040,346)"><path d="M5 0.2 Q6.5 2 8 4.8 Q9.8 7.2 9.6 8.6 Q9.2 9.8 7.5 9.8 Q6 9.8 5 9.2 Q4 9.8 2.5 9.8 Q0.8 9.8 0.4 8.6 Q0.2 7.2 2 4.8 Q3.5 2 5 0.2 Z" fill="#dc0c18" stroke="#7a0008" stroke-width="0.9"/><path d="M4.8 2.5 Q3.8 4.5 3 7" stroke="#ff5050" stroke-width="1" fill="none"/></g><g transform="translate(1021,362)"><path d="M5 0.2 Q6.5 2 8 4.8 Q9.8 7.2 9.6 8.6 Q9.2 9.8 7.5 9.8 Q6 9.8 5 9.2 Q4 9.8 2.5 9.8 Q0.8 9.8 0.4 8.6 Q0.2 7.2 2 4.8 Q3.5 2 5 0.2 Z" fill="#dc0c18" stroke="#7a0008" stroke-width="0.9"/><path d="M4.8 2.5 Q3.8 4.5 3 7" stroke="#ff5050" stroke-width="1" fill="none"/></g><g transform="translate(999,377)"><path d="M0.5 2.5 Q0.5 0.5 2.5 0.5 H6 L8 2.5 H13.5 V12.5 H1.5 Z" fill="#eeee8a" stroke="#7a7a58" stroke-width="1"/><path d="M14 3 V12.8 H2" stroke="#000" stroke-width="1.6" fill="none"/><rect x="2" y="4" width="10.5" height="7.5" fill="#e4e46c" opacity="0.7"/></g><g transform="translate(999,393)"><path d="M0.5 2.5 Q0.5 0.5 2.5 0.5 H6 L8 2.5 H13.5 V12.5 H1.5 Z" fill="#eeee8a" stroke="#7a7a58" stroke-width="1"/><path d="M14 3 V12.8 H2" stroke="#000" stroke-width="1.6" fill="none"/><rect x="2" y="4" width="10.5" height="7.5" fill="#e4e46c" opacity="0.7"/></g><g transform="translate(999,409)"><path d="M0.5 2.5 Q0.5 0.5 2.5 0.5 H6 L8 2.5 H13.5 V12.5 H1.5 Z" fill="#eeee8a" stroke="#7a7a58" stroke-width="1"/><path d="M14 3 V12.8 H2" stroke="#000" stroke-width="1.6" fill="none"/><rect x="2" y="4" width="10.5" height="7.5" fill="#e4e46c" opacity="0.7"/></g><g transform="translate(999,425)"><path d="M0.5 2.5 Q0.5 0.5 2.5 0.5 H6 L8 2.5 H13.5 V12.5 H1.5 Z" fill="#eeee8a" stroke="#7a7a58" stroke-width="1"/><path d="M14 3 V12.8 H2" stroke="#000" stroke-width="1.6" fill="none"/><rect x="2" y="4" width="10.5" height="7.5" fill="#e4e46c" opacity="0.7"/></g><g transform="translate(980,441)"><path d="M0.5 2.5 Q0.5 0.5 2.5 0.5 H6 L8 2.5 H13.5 V12.5 H1.5 Z" fill="#eeee8a" stroke="#7a7a58" stroke-width="1"/><path d="M14 3 V12.8 H2" stroke="#000" stroke-width="1.6" fill="none"/><rect x="2" y="4" width="10.5" height="7.5" fill="#e4e46c" opacity="0.7"/></g><g transform="translate(980,457)"><path d="M0.5 2.5 Q0.5 0.5 2.5 0.5 H6 L8 2.5 H13.5 V12.5 H1.5 Z" fill="#eeee8a" stroke="#7a7a58" stroke-width="1"/><path d="M14 3 V12.8 H2" stroke="#000" stroke-width="1.6" fill="none"/><rect x="2" y="4" width="10.5" height="7.5" fill="#e4e46c" opacity="0.7"/></g><g transform="translate(980,473)"><path d="M0.5 2.5 Q0.5 0.5 2.5 0.5 H6 L8 2.5 H13.5 V12.5 H1.5 Z" fill="#eeee8a" stroke="#7a7a58" stroke-width="1"/><path d="M14 3 V12.8 H2" stroke="#000" stroke-width="1.6" fill="none"/><rect x="2" y="4" width="10.5" height="7.5" fill="#e4e46c" opacity="0.7"/></g><g transform="translate(980,489)"><path d="M0.5 2.5 Q0.5 0.5 2.5 0.5 H6 L8 2.5 H13.5 V12.5 H1.5 Z" fill="#eeee8a" stroke="#7a7a58" stroke-width="1"/><path d="M14 3 V12.8 H2" stroke="#000" stroke-width="1.6" fill="none"/><rect x="2" y="4" width="10.5" height="7.5" fill="#e4e46c" opacity="0.7"/></g><g transform="translate(980,505)"><path d="M0.5 2.5 Q0.5 0.5 2.5 0.5 H6 L8 2.5 H13.5 V12.5 H1.5 Z" fill="#eeee8a" stroke="#7a7a58" stroke-width="1"/><path d="M14 3 V12.8 H2" stroke="#000" stroke-width="1.6" fill="none"/><rect x="2" y="4" width="10.5" height="7.5" fill="#e4e46c" opacity="0.7"/></g><g transform="translate(980,521)"><path d="M0.5 2.5 Q0.5 0.5 2.5 0.5 H6 L8 2.5 H13.5 V12.5 H1.5 Z" fill="#eeee8a" stroke="#7a7a58" stroke-width="1"/><path d="M14 3 V12.8 H2" stroke="#000" stroke-width="1.6" fill="none"/><rect x="2" y="4" width="10.5" height="7.5" fill="#e4e46c" opacity="0.7"/></g><g transform="translate(980,537)"><path d="M0.5 2.5 Q0.5 0.5 2.5 0.5 H6 L8 2.5 H13.5 V12.5 H1.5 Z" fill="#eeee8a" stroke="#7a7a58" stroke-width="1"/><path d="M14 3 V12.8 H2" stroke="#000" stroke-width="1.6" fill="none"/><rect x="2" y="4" width="10.5" height="7.5" fill="#e4e46c" opacity="0.7"/></g><g transform="translate(980,553)"><path d="M0.5 2.5 Q0.5 0.5 2.5 0.5 H6 L8 2.5 H13.5 V12.5 H1.5 Z" fill="#eeee8a" stroke="#7a7a58" stroke-width="1"/><path d="M14 3 V12.8 H2" stroke="#000" stroke-width="1.6" fill="none"/><rect x="2" y="4" width="10.5" height="7.5" fill="#e4e46c" opacity="0.7"/></g><g transform="translate(980,569)"><path d="M0.5 2.5 Q0.5 0.5 2.5 0.5 H6 L8 2.5 H13.5 V12.5 H1.5 Z" fill="#eeee8a" stroke="#7a7a58" stroke-width="1"/><path d="M14 3 V12.8 H2" stroke="#000" stroke-width="1.6" fill="none"/><rect x="2" y="4" width="10.5" height="7.5" fill="#e4e46c" opacity="0.7"/></g><g transform="translate(980,585)"><path d="M0.5 2.5 Q0.5 0.5 2.5 0.5 H6 L8 2.5 H13.5 V12.5 H1.5 Z" fill="#eeee8a" stroke="#7a7a58" stroke-width="1"/><path d="M14 3 V12.8 H2" stroke="#000" stroke-width="1.6" fill="none"/><rect x="2" y="4" width="10.5" height="7.5" fill="#e4e46c" opacity="0.7"/></g></svg>
<div class="r" style="left:966px;top:102px;width:17px;height:521px;background:#f3f3f3;"></div>
<div class="r" style="left:983px;top:102px;width:2px;height:521px;background:#6e6e6e;"></div>
<div class="r" style="left:1247px;top:104px;width:16px;height:503px;background:linear-gradient(90deg,#e4e4e4,#f2f2f2 40%,#f4f4f4 60%,#ececec);"></div>
<svg class="r" style="left:1250px;top:108px;" width="10" height="8" viewBox="0 0 10 8"><path d="M1 6 L5 2 L9 6 Z" fill="#555"/></svg>
<svg class="r" style="left:1250px;top:593px;" width="10" height="8" viewBox="0 0 10 8"><path d="M1 2 L5 6 L9 2 Z" fill="#555"/></svg>
<div class="r" style="left:1247px;top:335px;width:15px;height:252px;background:linear-gradient(90deg,#f8f8f8,#e6e6e6 50%,#d4d4d8);border:1px solid #8c8c8c;border-radius:2px;box-sizing:border-box;"></div>
<svg class="r" style="left:1250px;top:456px;" width="9" height="8" viewBox="0 0 9 8"><path d="M1 1.5 H8 M1 3.5 H8 M1 5.5 H8" stroke="#333" stroke-width="1"/></svg>
<div class="r" style="left:985px;top:607px;width:262px;height:16px;background:linear-gradient(#e6e6e6,#f2f2f2 40%,#f4f4f4 60%,#ececec);"></div>
<svg class="r" style="left:989px;top:610px;" width="8" height="10" viewBox="0 0 8 10"><path d="M6 1 L2 5 L6 9 Z" fill="#555"/></svg>
<svg class="r" style="left:1234px;top:610px;" width="8" height="10" viewBox="0 0 8 10"><path d="M2 1 L6 5 L2 9 Z" fill="#555"/></svg>
<div class="r" style="left:1023px;top:607px;width:205px;height:15px;background:linear-gradient(#f8f8f8,#e6e6e6 50%,#d4d4d8);border:1px solid #8c8c8c;border-radius:2px;box-sizing:border-box;"></div>
<svg class="r" style="left:1120px;top:610px;" width="8" height="9" viewBox="0 0 8 9"><path d="M1.5 1 V8 M3.5 1 V8 M5.5 1 V8" stroke="#333" stroke-width="1"/></svg>
<div class="r" style="left:1247px;top:607px;width:16px;height:16px;background:#f0f0f0;"></div>
<div class="t" style="left:985px;top:650.50px;font-size:11px;line-height:11px;color:#000;transform:scaleX(0.86);transform-origin:0 0;">Add</div>
<div class="t" style="left:1014.4px;top:650.50px;font-size:11px;line-height:11px;color:#000;transform:scaleX(0.86);transform-origin:0 0;">Temp</div>
<div class="t" style="left:1047.5px;top:650.50px;font-size:11px;line-height:11px;color:#000;transform:scaleX(0.86);transform-origin:0 0;">Make</div>
<div class="t" style="left:1081.9px;top:650.50px;font-size:11px;line-height:11px;color:#000;transform:scaleX(0.86);transform-origin:0 0;">Mod</div>
<div class="t" style="left:1122.4px;top:650.50px;font-size:11px;line-height:11px;color:#000;transform:scaleX(0.86);transform-origin:0 0;">Info</div>
<div class="t" style="left:1154.9px;top:650.50px;font-size:11px;line-height:11px;color:#000;transform:scaleX(0.86);transform-origin:0 0;">Xtra</div>
<div class="t" style="left:1211px;top:650.50px;font-size:11px;line-height:11px;color:#000;transform:scaleX(0.86);transform-origin:0 0;">Del</div>
<div class="r" style="left:1111px;top:632px;width:1px;height:31px;background:#909090;"></div>
<div class="r" style="left:1198px;top:631px;width:1px;height:32px;background:#909090;"></div>
<svg class="r" style="left:987px;top:635px;" width="12" height="12" viewBox="0 0 12 12"><path d="M4 0.5 H8 V4 H11.5 V8 H8 V11.5 H4 V8 H0.5 V4 H4 Z" fill="#10d010" stroke="#000" stroke-width="1"/></svg>
<svg class="r" style="left:1020px;top:635px;" width="13" height="12" viewBox="0 0 13 12"><g fill="#2a9a2a"><rect x="6" y="0" width="1" height="1"/><rect x="5" y="1" width="1" height="1"/><rect x="7" y="1" width="1" height="1"/><rect x="4" y="2" width="1" height="1"/><rect x="6" y="2" width="1" height="1"/><rect x="8" y="2" width="1" height="1"/><rect x="1" y="4" width="1" height="1"/><rect x="3" y="4" width="1" height="1"/><rect x="5" y="4" width="1" height="1"/><rect x="7" y="4" width="1" height="1"/><rect x="9" y="4" width="1" height="1"/><rect x="11" y="4" width="1" height="1"/><rect x="0" y="5" width="1" height="1"/><rect x="2" y="5" width="1" height="1"/><rect x="4" y="5" width="1" height="1"/><rect x="6" y="5" width="1" height="1"/><rect x="8" y="5" width="1" height="1"/><rect x="10" y="5" width="1" height="1"/><rect x="12" y="5" width="1" height="1"/><rect x="1" y="6" width="1" height="1"/><rect x="3" y="6" width="1" height="1"/><rect x="5" y="6" width="1" height="1"/><rect x="7" y="6" width="1" height="1"/><rect x="9" y="6" width="1" height="1"/><rect x="11" y="6" width="1" height="1"/><rect x="0" y="7" width="1" height="1"/><rect x="2" y="7" width="1" height="1"/><rect x="4" y="7" width="1" height="1"/><rect x="6" y="7" width="1" height="1"/><rect x="8" y="7" width="1" height="1"/><rect x="10" y="7" width="1" height="1"/><rect x="12" y="7" width="1" height="1"/><rect x="4" y="9" width="1" height="1"/><rect x="6" y="9" width="1" height="1"/><rect x="8" y="9" width="1" height="1"/><rect x="5" y="10" width="1" height="1"/><rect x="7" y="10" width="1" height="1"/><rect x="6" y="11" width="1" height="1"/><rect x="5" y="3" width="3" height="1"/><rect x="5" y="8" width="3" height="1"/></g><path d="M6.5 1 V11 M1 6 H12" stroke="#8ae08a" stroke-width="1" opacity="0.6"/></svg>
<svg class="r" style="left:1051px;top:634px;" width="16" height="15" viewBox="0 0 16 15"><g fill="#222"><rect x="7" y="3" width="1" height="2"/><rect x="7" y="10" width="1" height="2"/><rect x="3" y="7" width="2" height="1"/><rect x="10" y="7" width="2" height="1"/><rect x="4" y="4" width="1" height="1"/><rect x="10" y="4" width="1" height="1"/><rect x="4" y="10" width="1" height="1"/><rect x="10" y="10" width="1" height="1"/></g><g fill="#999"><rect x="7" y="0" width="1" height="1"/><rect x="7" y="14" width="1" height="1"/><rect x="0" y="7" width="1" height="1"/><rect x="14" y="7" width="1" height="1"/><rect x="1" y="1" width="1" height="1"/><rect x="13" y="1" width="1" height="1"/><rect x="1" y="13" width="1" height="1"/><rect x="13" y="13" width="1" height="1"/></g></svg>
<svg class="r" style="left:1085px;top:634px;" width="16" height="15" viewBox="0 0 16 15"><path d="M1 14 L10 5" stroke="#000" stroke-width="2.4"/><path d="M1.3 13.7 L9.7 5.3" stroke="#5a3a1a" stroke-width="0.8"/><path d="M7 3 L10 0.5 L15.5 5.5 L13.5 7.5 L11 6.5 L9.5 6 Z" fill="#d8c880" stroke="#000" stroke-width="1"/></svg>
<svg class="r" style="left:1123px;top:633px;" width="13" height="17" viewBox="0 0 13 17"><path d="M2.5 4.5 Q2.5 1.2 6.5 1.2 Q10.5 1.2 10.5 4.5 Q10.5 7 7.5 8.2 L6.8 11" stroke="#222" stroke-width="3.6" fill="none" opacity="0.25"/><path d="M2.5 4.5 Q2.5 1.2 6.5 1.2 Q10.5 1.2 10.5 4.5 Q10.5 7 7.5 8.2 L6.8 11" stroke="#f0f020" stroke-width="2.8" fill="none"/><rect x="5.3" y="12.8" width="3" height="3" fill="#f0f020"/></svg>
<svg class="r" style="left:1155px;top:635px;" width="19" height="15" viewBox="0 0 19 15"><path d="M2 1.5 H15 V12 Q15 14 13 14 H2.5 Q0.8 14 0.8 12 V5 Q0.8 3 2 3 Z" fill="#fff" stroke="#102a7a" stroke-width="1.4"/><path d="M4 3 Q5 2 6 3 Q7 2 8 3 Q9 2 10 3 Q11 2 12 3" stroke="#2050c0" stroke-width="0.8" fill="none"/><rect x="3.5" y="5.5" width="4" height="4" fill="#1848c8"/><path d="M8.5 6 H13 M8.5 8 H13 M8.5 10 H13 M3.5 11.5 H13" stroke="#1848c8" stroke-width="1.2"/><path d="M15 3.5 L18 5 L16 13" stroke="#102a7a" stroke-width="1.2" fill="#e8ecf4"/></svg>
<svg class="r" style="left:1185px;top:646px;" width="8" height="5" viewBox="0 0 8 5"><path d="M0 0 H8 L4 4.5 Z" fill="#000"/></svg>
<svg class="r" style="left:1211px;top:635px;" width="14" height="13" viewBox="0 0 14 13"><path d="M1 1 L12.5 12 M12.5 1 L1 12" stroke="#6a0808" stroke-width="2"/></svg>
<div class="r" style="left:0px;top:769px;width:1280px;height:31px;background:linear-gradient(#4a4a4a 0px,#4a4a4a 1px,#222 1px,#222 2px,#6e6e6e 3px,#585858 9px,#3e3e3e 15px,#101010 16px,#0c0c0c 31px);"></div>
<svg class="r" style="left:8px;top:769px;" width="44" height="42" viewBox="0 0 44 42"><defs><radialGradient id="og" cx="50%" cy="75%" r="70%"><stop offset="0" stop-color="#50c8f8"/><stop offset="0.5" stop-color="#1a78c8"/><stop offset="1" stop-color="#0a3a78"/></radialGradient><linearGradient id="gl" x1="0" y1="0" x2="0" y2="1"><stop offset="0" stop-color="#fff" stop-opacity="0.55"/><stop offset="1" stop-color="#fff" stop-opacity="0.05"/></linearGradient></defs><circle cx="21.3" cy="21" r="20" fill="#0c1420"/><circle cx="21.3" cy="21" r="18.5" fill="url(#og)"/><path d="M12.5 4.5 Q17 2 23.5 4.5 L21.5 14 Q16 11.5 11 14 Z" fill="#f06018"/><path d="M23.5 5.5 Q28 8 33.5 6.5 L32 16.5 Q26.5 18 21.5 14.5 Z" fill="#78c030"/><path d="M11 14.5 Q16 12 21.5 14.5 L19.5 24 Q14.5 21.5 9.5 24 Z" fill="#30a8f0"/><path d="M21.5 15 Q26.5 18.5 32 16.5 L30 26.5 Q25 28 19.5 24.5 Z" fill="#f8c028"/><path d="M3 19 Q3 3 21.3 2.5 Q39.5 3 39.5 19 Q30 14 21.3 15 Q12 14 3 19 Z" fill="url(#gl)"/></svg>
<div class="r" style="left:62px;top:772px;width:107px;height:26px;background:linear-gradient(#b4b4b4 0px,#9c9c9c 2px,#808080 7px,#6c6c6c 11px,#1a1a1a 12px,#141414 25px);border:1px solid #7a7a7a;border-radius:3px;box-sizing:border-box;box-shadow:inset 0 0 0 1px #151515,0 0 0 1px #101010;"></div>
<div class="t" style="left:90.5px;top:779.00px;font-size:12px;line-height:12px;color:#f2f2f2;transform:scaleX(0.98);transform-origin:0 0;">Windows L...</div>
<svg class="r" style="left:70px;top:776px;" width="16" height="18" viewBox="0 0 16 18"><circle cx="5" cy="5" r="3" fill="#5aa8e8"/><path d="M0 14 Q0 8.5 5 8.5 Q10 8.5 10 14 Z" fill="#3c88d0"/><circle cx="10" cy="7" r="3.2" fill="#6fcf4f"/><path d="M4 17 Q4 11 10 11 Q16 11 16 17 Z" fill="#5cbf3c"/></svg>
<div class="r" style="left:173px;top:772px;width:106px;height:26px;background:linear-gradient(#b4b4b4 0px,#9c9c9c 2px,#808080 7px,#6c6c6c 11px,#1a1a1a 12px,#141414 25px);border:1px solid #7a7a7a;border-radius:3px;box-sizing:border-box;box-shadow:inset 0 0 0 1px #151515,0 0 0 1px #101010;"></div>
<div class="t" style="left:201.5px;top:779.00px;font-size:12px;line-height:12px;color:#f2f2f2;transform:scaleX(0.98);transform-origin:0 0;">·$12FWWo...</div>
<svg class="r" style="left:181px;top:776px;" width="16" height="18" viewBox="0 0 16 18"><circle cx="8" cy="5" r="3.2" fill="#6fcf4f" stroke="#3a8a2a" stroke-width="0.6"/><path d="M2 16 Q2 9 8 9 Q14 9 14 16 Z" fill="#5cbf3c"/><path d="M10 1 L15 0 L13 4 Z" fill="#e8f0f0"/></svg>
<div class="r" style="left:284px;top:772px;width:106px;height:26px;background:linear-gradient(#b4b4b4 0px,#9c9c9c 2px,#808080 7px,#6c6c6c 11px,#1a1a1a 12px,#141414 25px);border:1px solid #7a7a7a;border-radius:3px;box-sizing:border-box;box-shadow:inset 0 0 0 1px #151515,0 0 0 1px #101010;"></div>
<div class="t" style="left:312.5px;top:779.00px;font-size:12px;line-height:12px;color:#f2f2f2;transform:scaleX(0.98);transform-origin:0 0;">Bruno!? - ...</div>
<svg class="r" style="left:292px;top:776px;" width="16" height="18" viewBox="0 0 16 18"><circle cx="8" cy="5" r="3.2" fill="#6fcf4f" stroke="#3a8a2a" stroke-width="0.6"/><path d="M2 16 Q2 9 8 9 Q14 9 14 16 Z" fill="#5cbf3c"/><path d="M10 1 L15 0 L13 4 Z" fill="#e8f0f0"/></svg>
<div class="r" style="left:395px;top:772px;width:106px;height:26px;background:linear-gradient(#b4b4b4 0px,#9c9c9c 2px,#808080 7px,#6c6c6c 11px,#1a1a1a 12px,#141414 25px);border:1px solid #7a7a7a;border-radius:3px;box-sizing:border-box;box-shadow:inset 0 0 0 1px #151515,0 0 0 1px #101010;"></div>
<div class="t" style="left:423.5px;top:779.00px;font-size:12px;line-height:12px;color:#f2f2f2;transform:scaleX(0.98);transform-origin:0 0;">Zack - Con...</div>
<svg class="r" style="left:403px;top:776px;" width="16" height="18" viewBox="0 0 16 18"><circle cx="8" cy="5" r="3.2" fill="#6fcf4f" stroke="#3a8a2a" stroke-width="0.6"/><path d="M2 16 Q2 9 8 9 Q14 9 14 16 Z" fill="#5cbf3c"/><path d="M10 1 L15 0 L13 4 Z" fill="#e8f0f0"/></svg>
<div class="r" style="left:506px;top:772px;width:106px;height:26px;background:linear-gradient(#b4b4b4 0px,#9c9c9c 2px,#808080 7px,#6c6c6c 11px,#1a1a1a 12px,#141414 25px);border:1px solid #7a7a7a;border-radius:3px;box-sizing:border-box;box-shadow:inset 0 0 0 1px #151515,0 0 0 1px #101010;"></div>
<div class="t" style="left:534.5px;top:779.00px;font-size:12px;line-height:12px;color:#f2f2f2;transform:scaleX(0.98);transform-origin:0 0;">reborn - C...</div>
<svg class="r" style="left:514px;top:776px;" width="16" height="18" viewBox="0 0 16 18"><circle cx="8" cy="5" r="3.2" fill="#6fcf4f" stroke="#3a8a2a" stroke-width="0.6"/><path d="M2 16 Q2 9 8 9 Q14 9 14 16 Z" fill="#5cbf3c"/><path d="M10 1 L15 0 L13 4 Z" fill="#e8f0f0"/></svg>
<div class="r" style="left:617px;top:772px;width:107px;height:26px;background:linear-gradient(#b4b4b4 0px,#9c9c9c 2px,#808080 7px,#6c6c6c 11px,#1a1a1a 12px,#141414 25px);border:1px solid #7a7a7a;border-radius:3px;box-sizing:border-box;box-shadow:inset 0 0 0 1px #151515,0 0 0 1px #101010;"></div>
<div class="t" style="left:645.5px;top:779.00px;font-size:12px;line-height:12px;color:#f2f2f2;transform:scaleX(0.98);transform-origin:0 0;">Aydynbek ...</div>
<svg class="r" style="left:625px;top:776px;" width="16" height="18" viewBox="0 0 16 18"><circle cx="8" cy="5" r="3.2" fill="#6fcf4f" stroke="#3a8a2a" stroke-width="0.6"/><path d="M2 16 Q2 9 8 9 Q14 9 14 16 Z" fill="#5cbf3c"/><path d="M10 1 L15 0 L13 4 Z" fill="#e8f0f0"/></svg>
<div class="r" style="left:729px;top:772px;width:107px;height:26px;background:linear-gradient(#b4b4b4 0px,#9c9c9c 2px,#808080 7px,#6c6c6c 11px,#1a1a1a 12px,#141414 25px);border:1px solid #7a7a7a;border-radius:3px;box-sizing:border-box;box-shadow:inset 0 0 0 1px #151515,0 0 0 1px #101010;"></div>
<div class="t" style="left:757.5px;top:779.00px;font-size:12px;line-height:12px;color:#f2f2f2;transform:scaleX(0.98);transform-origin:0 0;">Command...</div>
<svg class="r" style="left:737px;top:777px;" width="16" height="16" viewBox="0 0 16 16"><circle cx="8" cy="8" r="7.5" fill="#3a6ac8"/><path d="M8 0.5 Q15.5 1 15.5 8.5 Q15 15.5 8 15.5 Q1 15.5 0.5 9 Q2 12 6 12 Q10 12 10.5 8 Q10 5 6.5 4.5 Q9 2 5 1.5 Z" fill="#e8701a"/></svg>
<div class="r" style="left:841px;top:772px;width:107px;height:26px;background:linear-gradient(#b4b4b4 0px,#9c9c9c 2px,#808080 7px,#6c6c6c 11px,#1a1a1a 12px,#141414 25px);border:1px solid #7a7a7a;border-radius:3px;box-sizing:border-box;box-shadow:inset 0 0 0 1px #151515,0 0 0 1px #101010;"></div>
<div class="t" style="left:869.5px;top:779.00px;font-size:12px;line-height:12px;color:#f2f2f2;transform:scaleX(0.98);transform-origin:0 0;">mIRC</div>
<svg class="r" style="left:849px;top:777px;" width="16" height="16" viewBox="0 0 16 16"><rect x="0" y="0" width="16" height="16" fill="#5a2aa8"/><rect x="0" y="8" width="16" height="8" fill="#e05818"/><text x="1" y="7" font-size="7" fill="#ddd" font-family="Liberation Sans">mi</text><text x="1" y="15" font-size="8" fill="#ff0" font-family="Liberation Sans" font-weight="bold">irc</text></svg>
<div class="r" style="left:952px;top:772px;width:110px;height:26px;background:linear-gradient(#2a2a2a,#1a1a1a 45%,#0a0a0a 50%,#0c0c0c);border:1px solid #7a7a7a;border-radius:3px;box-sizing:border-box;box-shadow:inset 0 0 0 1px #151515,0 0 0 1px #101010;"></div>
<div class="t" style="left:980.5px;top:779.00px;font-size:12px;line-height:12px;color:#f2f2f2;transform:scaleX(0.98);transform-origin:0 0;">Untitled - ...</div>
<svg class="r" style="left:962px;top:778px;" width="16" height="16" viewBox="0 0 16 16"><rect width="16" height="16" fill="#2e9a84"/><rect x="1" y="1" width="14" height="14" fill="#3aa890"/><path d="M7.5 7 L14 13.5" stroke="#fff" stroke-width="2.8" stroke-linecap="round"/><path d="M2.5 6 L5.5 3.2 L9 5 L8.5 8.5 L5 8.8 Z" fill="#fff"/><path d="M5 12.5 L12 5.5" stroke="#fff" stroke-width="2.8"/><circle cx="13" cy="4.5" r="2.6" fill="#fff"/><path d="M13 4.5 L15.5 2 L16 5 Z" fill="#3aa890"/><circle cx="4.5" cy="13" r="2.2" fill="#fff"/><circle cx="4.5" cy="13" r="0.8" fill="#1a4a40"/></svg>
<svg class="r" style="left:1073px;top:776px;" width="14" height="16" viewBox="0 0 14 16"><rect x="0.5" y="0.5" width="13" height="14" fill="#fff8c0" stroke="#222"/><rect x="2" y="2" width="10" height="11" fill="#f8f4a0"/><text x="3" y="12" font-size="11" font-weight="bold" font-family="Liberation Sans" fill="#000">?</text><rect x="13" y="2" width="1.5" height="13" fill="#888"/></svg>
<svg class="r" style="left:1096px;top:776px;" width="8" height="16" viewBox="0 0 8 16"><path d="M2 1 H6 M2 3 H6 M4 1 V6" stroke="#ddd" stroke-width="1"/><path d="M1 11 L4 14 L7 11 Z" fill="#ddd"/></svg>
<svg class="r" style="left:1113px;top:780px;" width="7" height="10" viewBox="0 0 7 10"><path d="M6 1 L1.5 5 L6 9" stroke="#eee" stroke-width="2" fill="none"/></svg>
<svg class="r" style="left:1127px;top:777px;" width="16" height="14" viewBox="0 0 16 14"><rect x="0.5" y="0.5" width="15" height="13" fill="#e8e8e8" stroke="#bbb"/><rect x="3" y="3" width="10" height="7" fill="#fafafa" stroke="#aaa" stroke-width="0.6"/><path d="M4 8 L12 4" stroke="#888"/></svg>
<svg class="r" style="left:1145px;top:777px;" width="16" height="14" viewBox="0 0 16 14"><rect x="1" y="10" width="2" height="3" fill="#7adf4a"/><rect x="4" y="8" width="2" height="5" fill="#7adf4a"/><rect x="7" y="6" width="2" height="7" fill="#7adf4a"/><rect x="10" y="3" width="2" height="10" fill="#7adf4a"/><rect x="13" y="1" width="2" height="12" fill="#7adf4a"/></svg>
<svg class="r" style="left:1162px;top:776px;" width="16" height="16" viewBox="0 0 16 16"><rect x="0" y="0" width="16" height="16" fill="#6a3ac0"/><rect x="0" y="8" width="16" height="8" fill="#e86a10"/><text x="1" y="7" font-size="7" fill="#ddd" font-family="Liberation Sans">m</text><text x="1" y="15" font-size="8" fill="#ff0" font-family="Liberation Sans" font-weight="bold">irc</text></svg>
<svg class="r" style="left:1180px;top:776px;" width="17" height="17" viewBox="0 0 17 17"><circle cx="8" cy="5" r="3.5" fill="#6fcf4f"/><path d="M1 16 Q1 9 8 9 Q15 9 15 16 Z" fill="#5cbf3c"/><circle cx="12.5" cy="12.5" r="3.5" fill="#d8d8d8" stroke="#777" stroke-width="0.8"/></svg>
<svg class="r" style="left:1199px;top:776px;" width="17" height="17" viewBox="0 0 17 17"><rect x="0.5" y="0.5" width="16" height="16" fill="#fff" stroke="#2a6a2a"/><text x="1" y="14" font-size="13" font-weight="bold" font-family="Liberation Sans" fill="#1a8a1a">V</text><text x="10" y="9" font-size="7" font-weight="bold" font-family="Liberation Sans" fill="#c02020">n</text><text x="10" y="15" font-size="7" font-weight="bold" font-family="Liberation Sans" fill="#c02020">c</text></svg>
<svg class="r" style="left:1218px;top:776px;" width="16" height="17" viewBox="0 0 16 17"><path d="M8 0.5 L15 3 V9 Q15 14 8 16.5 Q1 14 1 9 V3 Z" fill="#c04848" stroke="#a0a0a0" stroke-width="0.8"/><path d="M4.5 4.5 L11.5 11.5 M11.5 4.5 L4.5 11.5" stroke="#e8d0d0" stroke-width="2"/></svg>
<div class="t" style="left:1239.5px;top:779.00px;font-size:12px;line-height:12px;color:#f2f2f2;letter-spacing:0.2px;">09:47</div>
<div class="r" style="left:419px;top:143px;width:442px;height:484px;background:#bfd2ea;border:1px solid #1f3150;box-sizing:border-box;"></div>
<div class="r" style="left:420px;top:144px;width:440px;height:20px;background:linear-gradient(#a2bad6 0px,#9ab4d2 2px,#a4bed9 9px,#b0cbe6 16px,#b4cde6 17px,#bccadc 18px,#c0cee0 20px);"></div>
<div class="r" style="left:421px;top:146px;width:70px;height:16px;background:radial-gradient(ellipse at center,rgba(220,232,248,0.75),rgba(220,232,248,0) 70%);"></div>
<div class="t" style="left:422.5px;top:149.00px;font-size:12px;line-height:12px;color:#1a1a50;">Edit object</div>
<div class="r" style="left:841px;top:149px;width:15px;height:11px;background:linear-gradient(#e2e6ee,#c2cad8);border:1px solid #8d9bb1;border-radius:2px;box-sizing:border-box;"></div>
<svg class="r" style="left:845px;top:151px;" width="7" height="6" viewBox="0 0 7 6"><path d="M1 0.5 L6 5.5 M6 0.5 L1 5.5" stroke="#7a8090" stroke-width="1.3"/></svg>
<div class="r" style="left:421px;top:164px;width:438px;height:461px;background:#f3f3f3;"></div>
<div class="r" style="left:421px;top:164px;width:438px;height:1px;background:#fbfbfb;"></div>
<div class="r" style="left:421px;top:164px;width:1px;height:461px;background:#fafcff;"></div>
<div class="t" style="left:436.6px;top:176.00px;font-size:12px;line-height:12px;color:#000;transform:scaleX(0.88);transform-origin:0 0;">General</div>
<div class="t" style="left:485.6px;top:176.00px;font-size:12px;line-height:12px;color:#000;transform:scaleX(0.88);transform-origin:0 0;">Physics Model</div>
<div class="t" style="left:565.6px;top:174.00px;font-size:12px;line-height:12px;color:#000;transform:scaleX(0.88);transform-origin:0 0;">Settings</div>
<div class="t" style="left:615.4px;top:176.00px;font-size:12px;line-height:12px;color:#000;transform:scaleX(0.88);transform-origin:0 0;">Dependencies</div>
<div class="t" style="left:696.5px;top:176.00px;font-size:12px;line-height:12px;color:#000;transform:scaleX(0.88);transform-origin:0 0;">Scripts</div>
<div class="t" style="left:740.4px;top:176.00px;font-size:12px;line-height:12px;color:#000;transform:scaleX(0.88);transform-origin:0 0;">Dialogue</div>
<div class="r" style="left:477px;top:173px;width:2px;height:17px;background:#7c7c7c;"></div>
<div class="r" style="left:609px;top:171px;width:2px;height:19px;background:#7c7c7c;"></div>
<div class="r" style="left:688.5px;top:173px;width:2px;height:17px;background:#7c7c7c;"></div>
<div class="r" style="left:732.5px;top:173px;width:2px;height:17px;background:#7c7c7c;"></div>
<div class="r" style="left:786px;top:173px;width:2px;height:17px;background:#7c7c7c;"></div>
<div class="r" style="left:850px;top:190px;width:2px;height:399px;background:#767676;"></div>
<div class="r" style="left:428px;top:588px;width:424px;height:2px;background:#767676;"></div>
<div class="r" style="left:432px;top:197px;width:418px;height:390px;overflow:hidden;">
<div class="r" style="left:81px;top:-3px;width:290px;height:19px;background:#fff;border-top:2px solid #6e6e6e;border-left:2px solid #6e6e6e;box-sizing:border-box;"></div>
<div class="t" style="left:10.5px;top:2.00px;font-size:12px;line-height:12px;color:#000;transform:scaleX(0.88);transform-origin:0 0;">ListenerScale</div>
<div class="t" style="left:84px;top:0.00px;font-size:12px;line-height:12px;color:#000;transform:scaleX(0.88);transform-origin:0 0;">1.000</div>
<div class="r" style="left:354px;top:-1px;width:16px;height:8px;background:#f9f9f9;border-right:2px solid #6e6e6e;border-bottom:2px solid #6e6e6e;box-sizing:border-box;"></div>
<div class="r" style="left:354px;top:8px;width:16px;height:8px;background:#f9f9f9;border-right:2px solid #6e6e6e;border-bottom:2px solid #6e6e6e;box-sizing:border-box;"></div>
<svg class="r" style="left:361px;top:2px;" width="5" height="3" viewBox="0 0 5 3"><path d="M0 3 L2.5 0 L5 3 Z" fill="#000"/></svg>
<svg class="r" style="left:361px;top:11px;" width="5" height="3" viewBox="0 0 5 3"><path d="M0 0 L2.5 3 L5 0 Z" fill="#000"/></svg>
<div class="r" style="left:10px;top:32px;width:12px;height:12px;background:#fbfbfb;border-top:2px solid #6e6e6e;border-left:2px solid #6e6e6e;box-sizing:border-box;"></div>
<div class="t" style="left:28.5px;top:32.00px;font-size:12px;line-height:12px;color:#000;transform:scaleX(0.88);transform-origin:0 0;">IsStealthUnit</div>
<div class="r" style="left:62px;top:59px;width:309px;height:19px;background:#fff;border-top:2px solid #6e6e6e;border-left:2px solid #6e6e6e;box-sizing:border-box;"></div>
<div class="t" style="left:10.5px;top:64.00px;font-size:12px;line-height:12px;color:#000;transform:scaleX(0.88);transform-origin:0 0;">TurnRate</div>
<div class="t" style="left:65px;top:62.00px;font-size:12px;line-height:12px;color:#000;transform:scaleX(0.88);transform-origin:0 0;">180.000</div>
<div class="r" style="left:354px;top:61px;width:16px;height:8px;background:#f9f9f9;border-right:2px solid #6e6e6e;border-bottom:2px solid #6e6e6e;box-sizing:border-box;"></div>
<div class="r" style="left:354px;top:70px;width:16px;height:8px;background:#f9f9f9;border-right:2px solid #6e6e6e;border-bottom:2px solid #6e6e6e;box-sizing:border-box;"></div>
<svg class="r" style="left:361px;top:64px;" width="5" height="3" viewBox="0 0 5 3"><path d="M0 3 L2.5 0 L5 3 Z" fill="#000"/></svg>
<svg class="r" style="left:361px;top:73px;" width="5" height="3" viewBox="0 0 5 3"><path d="M0 0 L2.5 3 L5 0 Z" fill="#000"/></svg>
<div class="r" style="left:79px;top:90px;width:292px;height:19px;background:#fff;border-top:2px solid #6e6e6e;border-left:2px solid #6e6e6e;box-sizing:border-box;"></div>
<div class="t" style="left:10.5px;top:95.00px;font-size:12px;line-height:12px;color:#000;transform:scaleX(0.88);transform-origin:0 0;">JumpVelocity</div>
<div class="t" style="left:82px;top:93.00px;font-size:12px;line-height:12px;color:#000;transform:scaleX(0.88);transform-origin:0 0;">5.500</div>
<div class="r" style="left:354px;top:92px;width:16px;height:8px;background:#f9f9f9;border-right:2px solid #6e6e6e;border-bottom:2px solid #6e6e6e;box-sizing:border-box;"></div>
<div class="r" style="left:354px;top:101px;width:16px;height:8px;background:#f9f9f9;border-right:2px solid #6e6e6e;border-bottom:2px solid #6e6e6e;box-sizing:border-box;"></div>
<svg class="r" style="left:361px;top:95px;" width="5" height="3" viewBox="0 0 5 3"><path d="M0 3 L2.5 0 L5 3 Z" fill="#000"/></svg>
<svg class="r" style="left:361px;top:104px;" width="5" height="3" viewBox="0 0 5 3"><path d="M0 0 L2.5 3 L5 0 Z" fill="#000"/></svg>
<div class="r" style="left:90px;top:121px;width:281px;height:19px;background:#fff;border-top:2px solid #6e6e6e;border-left:2px solid #6e6e6e;box-sizing:border-box;"></div>
<div class="t" style="left:10.5px;top:126.00px;font-size:12px;line-height:12px;color:#000;transform:scaleX(0.88);transform-origin:0 0;">SkeletonHeight</div>
<div class="t" style="left:93px;top:124.00px;font-size:12px;line-height:12px;color:#000;transform:scaleX(0.88);transform-origin:0 0;">0.000</div>
<div class="r" style="left:354px;top:123px;width:16px;height:8px;background:#f9f9f9;border-right:2px solid #6e6e6e;border-bottom:2px solid #6e6e6e;box-sizing:border-box;"></div>
<div class="r" style="left:354px;top:132px;width:16px;height:8px;background:#f9f9f9;border-right:2px solid #6e6e6e;border-bottom:2px solid #6e6e6e;box-sizing:border-box;"></div>
<svg class="r" style="left:361px;top:126px;" width="5" height="3" viewBox="0 0 5 3"><path d="M0 3 L2.5 0 L5 3 Z" fill="#000"/></svg>
<svg class="r" style="left:361px;top:135px;" width="5" height="3" viewBox="0 0 5 3"><path d="M0 0 L2.5 3 L5 0 Z" fill="#000"/></svg>
<div class="r" style="left:87px;top:152px;width:284px;height:19px;background:#fff;border-top:2px solid #6e6e6e;border-left:2px solid #6e6e6e;box-sizing:border-box;"></div>
<div class="t" style="left:10.5px;top:157.00px;font-size:12px;line-height:12px;color:#000;transform:scaleX(0.88);transform-origin:0 0;">SkeletonWidth</div>
<div class="t" style="left:90px;top:155.00px;font-size:12px;line-height:12px;color:#000;transform:scaleX(0.88);transform-origin:0 0;">0.000</div>
<div class="r" style="left:354px;top:154px;width:16px;height:8px;background:#f9f9f9;border-right:2px solid #6e6e6e;border-bottom:2px solid #6e6e6e;box-sizing:border-box;"></div>
<div class="r" style="left:354px;top:163px;width:16px;height:8px;background:#f9f9f9;border-right:2px solid #6e6e6e;border-bottom:2px solid #6e6e6e;box-sizing:border-box;"></div>
<svg class="r" style="left:361px;top:157px;" width="5" height="3" viewBox="0 0 5 3"><path d="M0 3 L2.5 0 L5 3 Z" fill="#000"/></svg>
<svg class="r" style="left:361px;top:166px;" width="5" height="3" viewBox="0 0 5 3"><path d="M0 0 L2.5 3 L5 0 Z" fill="#000"/></svg>
<div class="r" style="left:10px;top:187px;width:12px;height:12px;background:#fbfbfb;border-top:2px solid #6e6e6e;border-left:2px solid #6e6e6e;box-sizing:border-box;"></div>
<div class="t" style="left:28.5px;top:187.00px;font-size:12px;line-height:12px;color:#000;transform:scaleX(0.88);transform-origin:0 0;">UseInnateBehavior</div>
<div class="r" style="left:121px;top:214px;width:250px;height:19px;background:#fff;border-top:2px solid #6e6e6e;border-left:2px solid #6e6e6e;box-sizing:border-box;"></div>
<div class="t" style="left:10.5px;top:219.00px;font-size:12px;line-height:12px;color:#000;transform:scaleX(0.88);transform-origin:0 0;">InnateAggressiveness</div>
<div class="t" style="left:124px;top:217.00px;font-size:12px;line-height:12px;color:#000;transform:scaleX(0.88);transform-origin:0 0;">0.500</div>
<div class="r" style="left:354px;top:216px;width:16px;height:8px;background:#f9f9f9;border-right:2px solid #6e6e6e;border-bottom:2px solid #6e6e6e;box-sizing:border-box;"></div>
<div class="r" style="left:354px;top:225px;width:16px;height:8px;background:#f9f9f9;border-right:2px solid #6e6e6e;border-bottom:2px solid #6e6e6e;box-sizing:border-box;"></div>
<svg class="r" style="left:361px;top:219px;" width="5" height="3" viewBox="0 0 5 3"><path d="M0 3 L2.5 0 L5 3 Z" fill="#000"/></svg>
<svg class="r" style="left:361px;top:228px;" width="5" height="3" viewBox="0 0 5 3"><path d="M0 0 L2.5 3 L5 0 Z" fill="#000"/></svg>
<div class="r" style="left:148px;top:245px;width:223px;height:19px;background:#fff;border-top:2px solid #6e6e6e;border-left:2px solid #6e6e6e;box-sizing:border-box;"></div>
<div class="t" style="left:10.5px;top:250.00px;font-size:12px;line-height:12px;color:#000;transform:scaleX(0.88);transform-origin:0 0;">InnateTakeCoverProbability</div>
<div class="t" style="left:151px;top:248.00px;font-size:12px;line-height:12px;color:#000;transform:scaleX(0.88);transform-origin:0 0;">0.500</div>
<div class="r" style="left:354px;top:247px;width:16px;height:8px;background:#f9f9f9;border-right:2px solid #6e6e6e;border-bottom:2px solid #6e6e6e;box-sizing:border-box;"></div>
<div class="r" style="left:354px;top:256px;width:16px;height:8px;background:#f9f9f9;border-right:2px solid #6e6e6e;border-bottom:2px solid #6e6e6e;box-sizing:border-box;"></div>
<svg class="r" style="left:361px;top:250px;" width="5" height="3" viewBox="0 0 5 3"><path d="M0 3 L2.5 0 L5 3 Z" fill="#000"/></svg>
<svg class="r" style="left:361px;top:259px;" width="5" height="3" viewBox="0 0 5 3"><path d="M0 0 L2.5 3 L5 0 Z" fill="#000"/></svg>
<div class="r" style="left:10px;top:280px;width:12px;height:12px;background:#fbfbfb;border-top:2px solid #6e6e6e;border-left:2px solid #6e6e6e;box-sizing:border-box;"></div>
<div class="t" style="left:28.5px;top:280.00px;font-size:12px;line-height:12px;color:#000;transform:scaleX(0.88);transform-origin:0 0;">InnateIsStationary</div>
<div class="t" style="left:10.5px;top:308.00px;font-size:12px;line-height:12px;color:#000;transform:scaleX(0.88);transform-origin:0 0;">FirstPersonHands</div>
<div class="r" style="left:10px;top:323px;width:366px;height:20px;background:#fff;border-top:2px solid #6e6e6e;border-left:2px solid #6e6e6e;box-sizing:border-box;"></div>
<div class="t" style="left:14.5px;top:328.00px;font-size:12px;line-height:12px;color:#000;transform:scaleX(0.9);transform-origin:0 0;">always\characters\f_hm_gdi.w3d</div>
<div class="r" style="left:355px;top:325px;width:21px;height:18px;background:#f7f7f7;border-right:2px solid #6e6e6e;border-bottom:2px solid #6e6e6e;box-sizing:border-box;"></div>
<svg class="r" style="left:360px;top:327px;" width="13" height="11" viewBox="0 0 13 11"><path d="M0.5 2 Q0.5 0.5 2 0.5 H5 L6 1.5 H11.5 V10 H1 Z" fill="#eeee88" stroke="#7a7a5a"/><path d="M12 2 V10.5 H1.5" stroke="#000" stroke-width="1.2" fill="none"/></svg>
<div class="t" style="left:10.5px;top:361.00px;font-size:12px;line-height:12px;color:#000;transform:scaleX(0.87);transform-origin:0 0;">HumanAnimOverrideDefID</div>
<div class="r" style="left:142px;top:355px;width:234px;height:22px;background:#f3f3f3;border-top:2px solid #6e6e6e;border-left:2px solid #6e6e6e;box-sizing:border-box;"></div>
<div class="r" style="left:355px;top:357px;width:21px;height:20px;background:#f7f7f7;border-right:2px solid #6e6e6e;border-bottom:2px solid #6e6e6e;box-sizing:border-box;"></div>
<svg class="r" style="left:361px;top:358px;" width="11" height="17" viewBox="0 0 11 17"><path d="M2.5 4.5 V13.5 H5.5 M2.5 8 H5.5" stroke="#000" stroke-width="1.2" fill="none"/><path d="M0 7 H5 L2.5 10.5 Z" fill="#000"/><rect x="0.5" y="0.5" width="4" height="4" fill="#e4e44a" stroke="#000" stroke-width="1"/><rect x="5.5" y="5.5" width="4.5" height="4.5" fill="#c81818" stroke="#000" stroke-width="1"/><rect x="5.5" y="11.5" width="4.5" height="4.5" fill="#28b048" stroke="#000" stroke-width="1"/></svg>
<div class="r" style="left:389px;top:0px;width:17px;height:16px;background:#f7f7f7;border-right:2px solid #6e6e6e;border-bottom:2px solid #6e6e6e;box-sizing:border-box;"></div>
<svg class="r" style="left:394px;top:6px;" width="7" height="4" viewBox="0 0 7 4"><path d="M0 4 L3.5 0 L7 4 Z" fill="#000"/></svg>
<div class="r" style="left:389px;top:366px;width:17px;height:16px;background:#f7f7f7;border-right:2px solid #6e6e6e;border-bottom:2px solid #6e6e6e;box-sizing:border-box;"></div>
<svg class="r" style="left:394px;top:373px;" width="7" height="4" viewBox="0 0 7 4"><path d="M0 0 L3.5 4 L7 0 Z" fill="#000"/></svg>
<div class="r" style="left:404px;top:253px;width:2px;height:17px;background:#6e6e6e;"></div>
<div class="r" style="left:390px;top:268px;width:16px;height:2px;background:#6e6e6e;"></div>
</div>
<div class="r" style="left:437px;top:377px;width:386px;height:97px;border:3px solid #e2000c;box-sizing:border-box;"></div>
<div class="r" style="left:573px;top:595px;width:74px;height:23px;background:#f4f4f4;border-top:1px solid #fdfdfd;border-left:1px solid #fdfdfd;border-right:2px solid #727272;border-bottom:2px solid #727272;box-sizing:border-box;"></div>
<div class="t" style="left:602.5px;top:600.00px;font-size:12px;line-height:12px;color:#000;transform:scaleX(0.88);transform-origin:0 0;">OK</div>
<div class="r" style="left:654px;top:595px;width:74px;height:23px;background:#f4f4f4;border-top:1px solid #fdfdfd;border-left:1px solid #fdfdfd;border-right:2px solid #727272;border-bottom:2px solid #727272;box-sizing:border-box;"></div>
<div class="t" style="left:674.5px;top:600.00px;font-size:12px;line-height:12px;color:#000;transform:scaleX(0.88);transform-origin:0 0;">Cancel</div>
<div class="r" style="left:740px;top:595px;width:112px;height:23px;background:#f4f4f4;border-top:1px solid #fdfdfd;border-left:1px solid #fdfdfd;border-right:2px solid #727272;border-bottom:2px solid #727272;box-sizing:border-box;"></div>
<div class="t" style="left:753.3px;top:600.00px;font-size:12px;line-height:12px;color:#000;transform:scaleX(0.88);transform-origin:0 0;">OK &amp; Propagate...</div>
</body></html>
